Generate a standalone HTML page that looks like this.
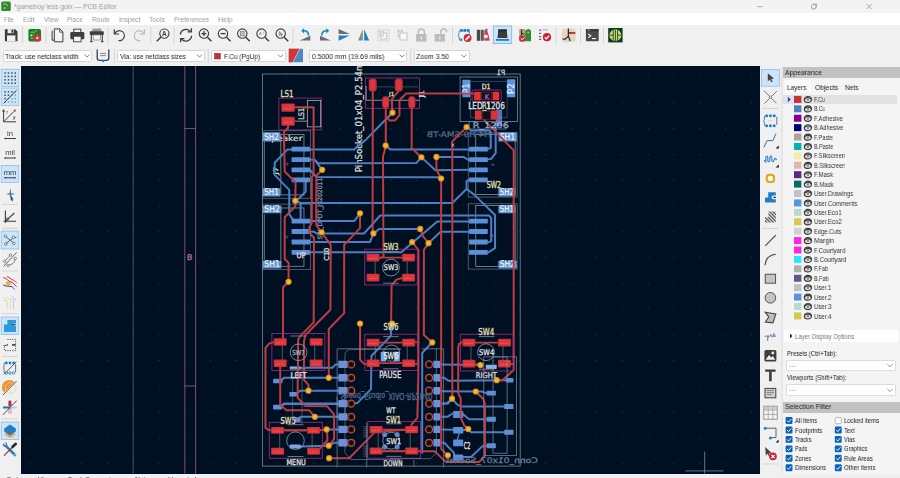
<!DOCTYPE html>
<html><head><meta charset="utf-8"><title>gameboy less goix — PCB Editor</title>
<style>
*{box-sizing:border-box}
html,body{margin:0;padding:0}
body{width:900px;height:478px;overflow:hidden;position:relative;background:#f0f0f0;font-family:"Liberation Sans", sans-serif;font-size:8px;color:#1a1a1a}
.abs{position:absolute}
.t{position:absolute;white-space:nowrap;transform-origin:0 0;line-height:1;will-change:transform}
#title{position:absolute;left:0;top:0;width:900px;height:13.4px;background:#f3f3f3}
#menu{position:absolute;left:0;top:13.4px;width:900px;height:11.6px;background:#fff}
#tb{position:absolute;left:0;top:25px;width:900px;height:41.8px;background:#f0f0f0}
.dd{position:absolute;top:50.3px;height:11.6px;background:#fff;border:0.6px solid #d6d6d6;border-radius:1.5px}
#canvas{position:absolute;left:20.6px;top:66.4px;width:739.2px;height:407.4px;background:#001023;overflow:hidden}
#panel{position:absolute;left:783.2px;top:66.6px;width:116.8px;height:411.4px;background:#f4f4f4}
.hdr{position:absolute;left:783.2px;width:116.8px;height:11px;background:#c2c2c2}
.sel{position:absolute;left:786px;width:110px;height:11.4px;background:#fff;border:0.6px solid #dcdcdc;border-radius:1.5px}
svg{position:absolute;left:0;top:0;overflow:visible}
</style></head><body>
<div id="title"></div>
<div id="menu"></div>
<div id="tb"></div>
<div class="dd" style="left:2.6px;width:89.6px"></div><div class="dd" style="left:116.6px;width:88px"></div><div class="dd" style="left:210.8px;width:74.8px"></div><div class="dd" style="left:309px;width:98.4px"></div><div class="dd" style="left:413.6px;width:56px"></div>
<div id="canvas"><svg width="739.2" height="407.4" viewBox="20.6 66.4 739.2 407.4" font-family="DejaVu Sans, Liberation Sans, sans-serif"><path d="M29.2,77.5h1.4M29.2,103.3h1.4M29.2,129.0h1.4M29.2,154.8h1.4M29.2,180.6h1.4M29.2,206.3h1.4M29.2,232.1h1.4M29.2,257.9h1.4M29.2,283.7h1.4M29.2,309.4h1.4M29.2,335.2h1.4M29.2,361.0h1.4M29.2,386.7h1.4M29.2,412.5h1.4M29.2,438.3h1.4M29.2,464.1h1.4M54.9,77.5h1.4M54.9,103.3h1.4M54.9,129.0h1.4M54.9,154.8h1.4M54.9,180.6h1.4M54.9,206.3h1.4M54.9,232.1h1.4M54.9,257.9h1.4M54.9,283.7h1.4M54.9,309.4h1.4M54.9,335.2h1.4M54.9,361.0h1.4M54.9,386.7h1.4M54.9,412.5h1.4M54.9,438.3h1.4M54.9,464.1h1.4M80.7,77.5h1.4M80.7,103.3h1.4M80.7,129.0h1.4M80.7,154.8h1.4M80.7,180.6h1.4M80.7,206.3h1.4M80.7,232.1h1.4M80.7,257.9h1.4M80.7,283.7h1.4M80.7,309.4h1.4M80.7,335.2h1.4M80.7,361.0h1.4M80.7,386.7h1.4M80.7,412.5h1.4M80.7,438.3h1.4M80.7,464.1h1.4M106.4,77.5h1.4M106.4,103.3h1.4M106.4,129.0h1.4M106.4,154.8h1.4M106.4,180.6h1.4M106.4,206.3h1.4M106.4,232.1h1.4M106.4,257.9h1.4M106.4,283.7h1.4M106.4,309.4h1.4M106.4,335.2h1.4M106.4,361.0h1.4M106.4,386.7h1.4M106.4,412.5h1.4M106.4,438.3h1.4M106.4,464.1h1.4M132.2,77.5h1.4M132.2,103.3h1.4M132.2,129.0h1.4M132.2,154.8h1.4M132.2,180.6h1.4M132.2,206.3h1.4M132.2,232.1h1.4M132.2,257.9h1.4M132.2,283.7h1.4M132.2,309.4h1.4M132.2,335.2h1.4M132.2,361.0h1.4M132.2,386.7h1.4M132.2,412.5h1.4M132.2,438.3h1.4M132.2,464.1h1.4M157.9,77.5h1.4M157.9,103.3h1.4M157.9,129.0h1.4M157.9,154.8h1.4M157.9,180.6h1.4M157.9,206.3h1.4M157.9,232.1h1.4M157.9,257.9h1.4M157.9,283.7h1.4M157.9,309.4h1.4M157.9,335.2h1.4M157.9,361.0h1.4M157.9,386.7h1.4M157.9,412.5h1.4M157.9,438.3h1.4M157.9,464.1h1.4M183.7,77.5h1.4M183.7,103.3h1.4M183.7,129.0h1.4M183.7,154.8h1.4M183.7,180.6h1.4M183.7,206.3h1.4M183.7,232.1h1.4M183.7,257.9h1.4M183.7,283.7h1.4M183.7,309.4h1.4M183.7,335.2h1.4M183.7,361.0h1.4M183.7,386.7h1.4M183.7,412.5h1.4M183.7,438.3h1.4M183.7,464.1h1.4M209.4,77.5h1.4M209.4,103.3h1.4M209.4,129.0h1.4M209.4,154.8h1.4M209.4,180.6h1.4M209.4,206.3h1.4M209.4,232.1h1.4M209.4,257.9h1.4M209.4,283.7h1.4M209.4,309.4h1.4M209.4,335.2h1.4M209.4,361.0h1.4M209.4,386.7h1.4M209.4,412.5h1.4M209.4,438.3h1.4M209.4,464.1h1.4M235.2,77.5h1.4M235.2,103.3h1.4M235.2,129.0h1.4M235.2,154.8h1.4M235.2,180.6h1.4M235.2,206.3h1.4M235.2,232.1h1.4M235.2,257.9h1.4M235.2,283.7h1.4M235.2,309.4h1.4M235.2,335.2h1.4M235.2,361.0h1.4M235.2,386.7h1.4M235.2,412.5h1.4M235.2,438.3h1.4M235.2,464.1h1.4M260.9,77.5h1.4M260.9,103.3h1.4M260.9,129.0h1.4M260.9,154.8h1.4M260.9,180.6h1.4M260.9,206.3h1.4M260.9,232.1h1.4M260.9,257.9h1.4M260.9,283.7h1.4M260.9,309.4h1.4M260.9,335.2h1.4M260.9,361.0h1.4M260.9,386.7h1.4M260.9,412.5h1.4M260.9,438.3h1.4M260.9,464.1h1.4M286.7,77.5h1.4M286.7,103.3h1.4M286.7,129.0h1.4M286.7,154.8h1.4M286.7,180.6h1.4M286.7,206.3h1.4M286.7,232.1h1.4M286.7,257.9h1.4M286.7,283.7h1.4M286.7,309.4h1.4M286.7,335.2h1.4M286.7,361.0h1.4M286.7,386.7h1.4M286.7,412.5h1.4M286.7,438.3h1.4M286.7,464.1h1.4M312.4,77.5h1.4M312.4,103.3h1.4M312.4,129.0h1.4M312.4,154.8h1.4M312.4,180.6h1.4M312.4,206.3h1.4M312.4,232.1h1.4M312.4,257.9h1.4M312.4,283.7h1.4M312.4,309.4h1.4M312.4,335.2h1.4M312.4,361.0h1.4M312.4,386.7h1.4M312.4,412.5h1.4M312.4,438.3h1.4M312.4,464.1h1.4M338.2,77.5h1.4M338.2,103.3h1.4M338.2,129.0h1.4M338.2,154.8h1.4M338.2,180.6h1.4M338.2,206.3h1.4M338.2,232.1h1.4M338.2,257.9h1.4M338.2,283.7h1.4M338.2,309.4h1.4M338.2,335.2h1.4M338.2,361.0h1.4M338.2,386.7h1.4M338.2,412.5h1.4M338.2,438.3h1.4M338.2,464.1h1.4M363.9,77.5h1.4M363.9,103.3h1.4M363.9,129.0h1.4M363.9,154.8h1.4M363.9,180.6h1.4M363.9,206.3h1.4M363.9,232.1h1.4M363.9,257.9h1.4M363.9,283.7h1.4M363.9,309.4h1.4M363.9,335.2h1.4M363.9,361.0h1.4M363.9,386.7h1.4M363.9,412.5h1.4M363.9,438.3h1.4M363.9,464.1h1.4M389.7,77.5h1.4M389.7,103.3h1.4M389.7,129.0h1.4M389.7,154.8h1.4M389.7,180.6h1.4M389.7,206.3h1.4M389.7,232.1h1.4M389.7,257.9h1.4M389.7,283.7h1.4M389.7,309.4h1.4M389.7,335.2h1.4M389.7,361.0h1.4M389.7,386.7h1.4M389.7,412.5h1.4M389.7,438.3h1.4M389.7,464.1h1.4M415.4,77.5h1.4M415.4,103.3h1.4M415.4,129.0h1.4M415.4,154.8h1.4M415.4,180.6h1.4M415.4,206.3h1.4M415.4,232.1h1.4M415.4,257.9h1.4M415.4,283.7h1.4M415.4,309.4h1.4M415.4,335.2h1.4M415.4,361.0h1.4M415.4,386.7h1.4M415.4,412.5h1.4M415.4,438.3h1.4M415.4,464.1h1.4M441.2,77.5h1.4M441.2,103.3h1.4M441.2,129.0h1.4M441.2,154.8h1.4M441.2,180.6h1.4M441.2,206.3h1.4M441.2,232.1h1.4M441.2,257.9h1.4M441.2,283.7h1.4M441.2,309.4h1.4M441.2,335.2h1.4M441.2,361.0h1.4M441.2,386.7h1.4M441.2,412.5h1.4M441.2,438.3h1.4M441.2,464.1h1.4M466.9,77.5h1.4M466.9,103.3h1.4M466.9,129.0h1.4M466.9,154.8h1.4M466.9,180.6h1.4M466.9,206.3h1.4M466.9,232.1h1.4M466.9,257.9h1.4M466.9,283.7h1.4M466.9,309.4h1.4M466.9,335.2h1.4M466.9,361.0h1.4M466.9,386.7h1.4M466.9,412.5h1.4M466.9,438.3h1.4M466.9,464.1h1.4M492.7,77.5h1.4M492.7,103.3h1.4M492.7,129.0h1.4M492.7,154.8h1.4M492.7,180.6h1.4M492.7,206.3h1.4M492.7,232.1h1.4M492.7,257.9h1.4M492.7,283.7h1.4M492.7,309.4h1.4M492.7,335.2h1.4M492.7,361.0h1.4M492.7,386.7h1.4M492.7,412.5h1.4M492.7,438.3h1.4M492.7,464.1h1.4M518.4,77.5h1.4M518.4,103.3h1.4M518.4,129.0h1.4M518.4,154.8h1.4M518.4,180.6h1.4M518.4,206.3h1.4M518.4,232.1h1.4M518.4,257.9h1.4M518.4,283.7h1.4M518.4,309.4h1.4M518.4,335.2h1.4M518.4,361.0h1.4M518.4,386.7h1.4M518.4,412.5h1.4M518.4,438.3h1.4M518.4,464.1h1.4M544.2,77.5h1.4M544.2,103.3h1.4M544.2,129.0h1.4M544.2,154.8h1.4M544.2,180.6h1.4M544.2,206.3h1.4M544.2,232.1h1.4M544.2,257.9h1.4M544.2,283.7h1.4M544.2,309.4h1.4M544.2,335.2h1.4M544.2,361.0h1.4M544.2,386.7h1.4M544.2,412.5h1.4M544.2,438.3h1.4M544.2,464.1h1.4M569.9,77.5h1.4M569.9,103.3h1.4M569.9,129.0h1.4M569.9,154.8h1.4M569.9,180.6h1.4M569.9,206.3h1.4M569.9,232.1h1.4M569.9,257.9h1.4M569.9,283.7h1.4M569.9,309.4h1.4M569.9,335.2h1.4M569.9,361.0h1.4M569.9,386.7h1.4M569.9,412.5h1.4M569.9,438.3h1.4M569.9,464.1h1.4M595.7,77.5h1.4M595.7,103.3h1.4M595.7,129.0h1.4M595.7,154.8h1.4M595.7,180.6h1.4M595.7,206.3h1.4M595.7,232.1h1.4M595.7,257.9h1.4M595.7,283.7h1.4M595.7,309.4h1.4M595.7,335.2h1.4M595.7,361.0h1.4M595.7,386.7h1.4M595.7,412.5h1.4M595.7,438.3h1.4M595.7,464.1h1.4M621.4,77.5h1.4M621.4,103.3h1.4M621.4,129.0h1.4M621.4,154.8h1.4M621.4,180.6h1.4M621.4,206.3h1.4M621.4,232.1h1.4M621.4,257.9h1.4M621.4,283.7h1.4M621.4,309.4h1.4M621.4,335.2h1.4M621.4,361.0h1.4M621.4,386.7h1.4M621.4,412.5h1.4M621.4,438.3h1.4M621.4,464.1h1.4M647.2,77.5h1.4M647.2,103.3h1.4M647.2,129.0h1.4M647.2,154.8h1.4M647.2,180.6h1.4M647.2,206.3h1.4M647.2,232.1h1.4M647.2,257.9h1.4M647.2,283.7h1.4M647.2,309.4h1.4M647.2,335.2h1.4M647.2,361.0h1.4M647.2,386.7h1.4M647.2,412.5h1.4M647.2,438.3h1.4M647.2,464.1h1.4M672.9,77.5h1.4M672.9,103.3h1.4M672.9,129.0h1.4M672.9,154.8h1.4M672.9,180.6h1.4M672.9,206.3h1.4M672.9,232.1h1.4M672.9,257.9h1.4M672.9,283.7h1.4M672.9,309.4h1.4M672.9,335.2h1.4M672.9,361.0h1.4M672.9,386.7h1.4M672.9,412.5h1.4M672.9,438.3h1.4M672.9,464.1h1.4M698.7,77.5h1.4M698.7,103.3h1.4M698.7,129.0h1.4M698.7,154.8h1.4M698.7,180.6h1.4M698.7,206.3h1.4M698.7,232.1h1.4M698.7,257.9h1.4M698.7,283.7h1.4M698.7,309.4h1.4M698.7,335.2h1.4M698.7,361.0h1.4M698.7,386.7h1.4M698.7,412.5h1.4M698.7,438.3h1.4M698.7,464.1h1.4M724.4,77.5h1.4M724.4,103.3h1.4M724.4,129.0h1.4M724.4,154.8h1.4M724.4,180.6h1.4M724.4,206.3h1.4M724.4,232.1h1.4M724.4,257.9h1.4M724.4,283.7h1.4M724.4,309.4h1.4M724.4,335.2h1.4M724.4,361.0h1.4M724.4,386.7h1.4M724.4,412.5h1.4M724.4,438.3h1.4M724.4,464.1h1.4M750.2,77.5h1.4M750.2,103.3h1.4M750.2,129.0h1.4M750.2,154.8h1.4M750.2,180.6h1.4M750.2,206.3h1.4M750.2,232.1h1.4M750.2,257.9h1.4M750.2,283.7h1.4M750.2,309.4h1.4M750.2,335.2h1.4M750.2,361.0h1.4M750.2,386.7h1.4M750.2,412.5h1.4M750.2,438.3h1.4M750.2,464.1h1.4" stroke="#2c3c54" stroke-width="1" opacity="0.75"/>
<path d="M132.8,66 V474" stroke="#5f7388" stroke-width="0.7"/>
<path d="M184.4,66 V474 M195.2,66 V474 M184.4,129 H195.2 M184.4,386.4 H195.2" stroke="#a45a8a" stroke-width="0.8" fill="none"/>
<text transform="translate(186.6,260.6)" font-size="7.81" fill="#b878a0" stroke="#b878a0" stroke-width="0.28" text-anchor="start" font-weight="normal">B</text>
<path d="M685,471.3 H723 M704.3,452 V474" stroke="#aab4c0" stroke-width="0.6"/>
<rect x="262.00" y="74.40" width="257.80" height="392.10" fill="none" stroke="#7f8990" stroke-width="0.8" rx="0"/>
<rect x="278.46" y="98.48" width="42.69" height="31.81" fill="none" stroke="#9a2f86" stroke-width="0.8" rx="0"/>
<rect x="306.92" y="101.00" width="13.40" height="26.28" fill="none" stroke="#bfc3c8" stroke-width="0.7" rx="0"/>
<polyline points="294.37,108.03 306.92,108.03" fill="none" stroke="#bfc3c8" stroke-width="0.7" stroke-linejoin="round" stroke-linecap="round"/>
<polyline points="294.37,121.59 306.92,121.59" fill="none" stroke="#bfc3c8" stroke-width="0.7" stroke-linejoin="round" stroke-linecap="round"/>
<text transform="translate(280.14,97.81)" font-size="8.78" fill="#e4e2b8" stroke="#e4e2b8" stroke-width="0.28" text-anchor="start" font-weight="normal" textLength="13.0" lengthAdjust="spacingAndGlyphs">LS1</text>
<text transform="translate(303.91,120.25) rotate(-90)" font-size="7.81" fill="#d8d8d8" stroke="#d8d8d8" stroke-width="0.28" text-anchor="start" font-weight="normal" textLength="12.0" lengthAdjust="spacingAndGlyphs">LS1</text>
<text transform="translate(362,172.6) rotate(-90)" font-size="9.27" fill="#dcdcdc" stroke="#dcdcdc" stroke-width="0.28" text-anchor="start" font-weight="normal" textLength="118.0" lengthAdjust="spacingAndGlyphs">PinSocket_01x04_P2.54mm</text>
<rect x="365.20" y="78.40" width="53.80" height="30.30" fill="none" stroke="#9a2f86" stroke-width="0.8" rx="0"/>
<polyline points="365.8,86.9 365.8,100.7 418.6,100.7" fill="none" stroke="#bfc3c8" stroke-width="0.7" stroke-linejoin="round" stroke-linecap="round"/>
<polyline points="376.4,87.3 417.2,87.3" fill="none" stroke="#bfc3c8" stroke-width="0.6" stroke-linejoin="round" stroke-linecap="round" opacity="0.5"/>
<text transform="translate(388.62,96.14)" font-size="5.61" fill="#e4e2b8" stroke="#e4e2b8" stroke-width="0.28" text-anchor="start" font-weight="normal">J1</text>
<text transform="translate(423.6,97.6) rotate(-90)" font-size="6.83" fill="#e8e8e8" stroke="#e8e8e8" stroke-width="0.28" text-anchor="start" font-weight="normal" textLength="7.0" lengthAdjust="spacingAndGlyphs">J1</text>
<rect x="262.05" y="131.19" width="48.22" height="67.47" fill="none" stroke="#7f8f9f" stroke-width="0.7" rx="0" opacity="0.8"/>
<rect x="280.47" y="135.05" width="23.10" height="60.27" fill="none" stroke="#9aa4ae" stroke-width="0.7" rx="0"/>
<polyline points="263.9,141.74 263.9,188.95" fill="none" stroke="#9aa4ae" stroke-width="0.7" stroke-linejoin="round" stroke-linecap="round"/>
<rect x="262.05" y="204.54" width="48.22" height="65.46" fill="none" stroke="#7f8f9f" stroke-width="0.7" rx="0" opacity="0.8"/>
<rect x="280.47" y="208.39" width="23.10" height="58.27" fill="none" stroke="#9aa4ae" stroke-width="0.7" rx="0"/>
<polyline points="263.9,215.09 263.9,260.29" fill="none" stroke="#9aa4ae" stroke-width="0.7" stroke-linejoin="round" stroke-linecap="round"/>
<text transform="translate(265,141.7)" font-size="7.81" fill="#e0e0e0" stroke="#e0e0e0" stroke-width="0.15" text-anchor="start" font-weight="normal" textLength="37.0" lengthAdjust="spacingAndGlyphs">Speaker</text>
<text transform="translate(277.79,175.23) rotate(-90)" font-size="6.1" fill="#e4e2b8" stroke="#e4e2b8" stroke-width="0.28" text-anchor="start" font-weight="normal" textLength="8.0" lengthAdjust="spacingAndGlyphs">J7</text>
<text transform="translate(321.6,240) rotate(-90)" font-size="6.1" fill="#8493ad" stroke="#8493ad" stroke-width="0.28" text-anchor="start" font-weight="normal" textLength="62.0" lengthAdjust="spacingAndGlyphs">SW_DPDT_JS202011</text>
<rect x="467.85" y="133.37" width="48.89" height="64.12" fill="none" stroke="#7f8f9f" stroke-width="0.7" rx="0" opacity="0.8"/>
<rect x="475.38" y="135.05" width="39.35" height="59.76" fill="none" stroke="#9aa4ae" stroke-width="0.7" rx="0"/>
<rect x="467.85" y="204.21" width="48.89" height="65.29" fill="none" stroke="#7f8f9f" stroke-width="0.7" rx="0" opacity="0.8"/>
<rect x="475.38" y="205.88" width="39.35" height="60.94" fill="none" stroke="#9aa4ae" stroke-width="0.7" rx="0"/>
<rect x="459.70" y="77.40" width="57.50" height="44.60" fill="none" stroke="#6f8f9f" stroke-width="0.8" rx="0"/>
<rect x="476" y="118" width="30" height="8" fill="#001023"/>
<rect x="470.20" y="81.70" width="36.50" height="36.30" fill="none" stroke="#3e5a70" stroke-width="0.7" rx="0"/>
<rect x="468.69" y="121.92" width="36.83" height="7.54" fill="none" stroke="#6f8f9f" stroke-width="0.7" rx="0"/>
<text transform="translate(504.8,75.2) scale(-1,1)" font-size="7.32" fill="#d0d0d0" stroke="#d0d0d0" stroke-width="0.28" text-anchor="start" font-weight="normal" textLength="8.6" lengthAdjust="spacingAndGlyphs">P1</text>
<text transform="translate(490.6,137.4) scale(-1,1)" font-size="7.56" fill="#56688a" stroke="#56688a" stroke-width="0.28" text-anchor="start" font-weight="normal" textLength="64.0" lengthAdjust="spacingAndGlyphs">H4 H9-SMA-TB</text>
<polyline points="392.1,113.1 365.52,140.07 353.8,149.78 309.43,149.78" fill="none" stroke="#4d7fc4" stroke-width="2.0" stroke-linejoin="round" stroke-linecap="round"/>
<polyline points="291.02,149.78 287.17,149.78 274.28,163.17 274.28,175.23 288.84,190.29 288.84,214.76 292.69,220.11" fill="none" stroke="#4d7fc4" stroke-width="2.0" stroke-linejoin="round" stroke-linecap="round"/>
<polyline points="309.6,160.1 314.1,160.1 317.7,163.6 415.95,163.51 420.97,157.65" fill="none" stroke="#4d7fc4" stroke-width="2.0" stroke-linejoin="round" stroke-linecap="round"/>
<polyline points="314.6,160.6 321.8,170.2" fill="none" stroke="#4d7fc4" stroke-width="2.0" stroke-linejoin="round" stroke-linecap="round"/>
<polyline points="309.6,170.3 311.4,172.4 316,177.4 438.55,177.74 440.73,178.91" fill="none" stroke="#4d7fc4" stroke-width="2.0" stroke-linejoin="round" stroke-linecap="round"/>
<polyline points="305.25,181.92 305.25,191.97 298.89,198.66 294.87,201.18" fill="none" stroke="#4d7fc4" stroke-width="2.0" stroke-linejoin="round" stroke-linecap="round"/>
<polyline points="294.87,201.18 300.23,203.37 451.95,203.35 466.18,189.46 466.18,181.59 468.69,180.25" fill="none" stroke="#4d7fc4" stroke-width="2.0" stroke-linejoin="round" stroke-linecap="round"/>
<polyline points="300.23,203.37 300.23,220.11" fill="none" stroke="#4d7fc4" stroke-width="2.0" stroke-linejoin="round" stroke-linecap="round"/>
<polyline points="466.18,189.46 473.71,195.0 494.64,215.43 494.64,248.57 487.94,252.76" fill="none" stroke="#4d7fc4" stroke-width="2.0" stroke-linejoin="round" stroke-linecap="round"/>
<polyline points="385.28,145.93 389.8,149.78 468.69,149.78" fill="none" stroke="#4d7fc4" stroke-width="2.0" stroke-linejoin="round" stroke-linecap="round"/>
<polyline points="420.97,157.65 434.87,170.54 468.69,170.2" fill="none" stroke="#4d7fc4" stroke-width="2.0" stroke-linejoin="round" stroke-linecap="round"/>
<polyline points="436.04,157.31 462.83,157.31 468.69,160.49" fill="none" stroke="#4d7fc4" stroke-width="2.0" stroke-linejoin="round" stroke-linecap="round"/>
<polyline points="466.7,126.8 470.5,130.8 488.8,130.8 490.4,132.6 490.4,148.3 486.9,149.7" fill="none" stroke="#4d7fc4" stroke-width="2.0" stroke-linejoin="round" stroke-linecap="round"/>
<polyline points="486.9,159.7 490.6,159.5 495.3,153.6 495.3,124" fill="none" stroke="#4d7fc4" stroke-width="2.0" stroke-linejoin="round" stroke-linecap="round"/>
<polyline points="309.43,221.45 353.8,221.45 359.66,213.75" fill="none" stroke="#4d7fc4" stroke-width="2.0" stroke-linejoin="round" stroke-linecap="round"/>
<polyline points="309.43,231.83 313.62,232.17 316.13,233.84 363.85,233.84 379.75,215.93 488.78,215.93 490.79,218.44 490.79,241.54 487.94,242.71" fill="none" stroke="#4d7fc4" stroke-width="2.0" stroke-linejoin="round" stroke-linecap="round"/>
<polyline points="309.43,242.38 369.71,242.38 373.05,233.84 378.91,229.32 419.8,229.32" fill="none" stroke="#4d7fc4" stroke-width="2.0" stroke-linejoin="round" stroke-linecap="round"/>
<polyline points="309.43,252.76 400.88,252.76 436.88,221.79 468.69,221.79" fill="none" stroke="#4d7fc4" stroke-width="2.0" stroke-linejoin="round" stroke-linecap="round"/>
<polyline points="428.17,243.55 440.23,232.17 468.69,232.17" fill="none" stroke="#4d7fc4" stroke-width="2.0" stroke-linejoin="round" stroke-linecap="round"/>
<polyline points="280.97,381.04 283.48,378.19 337.9,378.19" fill="none" stroke="#4d7fc4" stroke-width="2.0" stroke-linejoin="round" stroke-linecap="round"/>
<polyline points="295.2,394.43 300.23,391.09 337.9,391.09" fill="none" stroke="#4d7fc4" stroke-width="2.0" stroke-linejoin="round" stroke-linecap="round"/>
<polyline points="280.97,407.33 283.48,404.48 337.9,404.48" fill="none" stroke="#4d7fc4" stroke-width="2.0" stroke-linejoin="round" stroke-linecap="round"/>
<polyline points="300.23,368.15 332.04,368.15 335.38,364.8 337.9,364.8" fill="none" stroke="#4d7fc4" stroke-width="2.0" stroke-linejoin="round" stroke-linecap="round"/>
<polyline points="390.6,323.8 390.6,336 371,356.4 370.6,389.5 357.2,403.3 351,404" fill="none" stroke="#4d7fc4" stroke-width="2.0" stroke-linejoin="round" stroke-linecap="round"/>
<polyline points="280.97,406.37 283.48,403.86 337.9,403.86" fill="none" stroke="#4d7fc4" stroke-width="2.0" stroke-linejoin="round" stroke-linecap="round"/>
<polyline points="296.88,420.1 300.23,417.25 337.9,417.25" fill="none" stroke="#4d7fc4" stroke-width="2.0" stroke-linejoin="round" stroke-linecap="round"/>
<polyline points="326.18,429.81 337.9,429.81" fill="none" stroke="#4d7fc4" stroke-width="2.0" stroke-linejoin="round" stroke-linecap="round"/>
<polyline points="300.23,446.89 328.35,446.05 333.71,443.2 337.9,443.2" fill="none" stroke="#4d7fc4" stroke-width="2.0" stroke-linejoin="round" stroke-linecap="round"/>
<polyline points="431.86,342.53 421.81,353.42 421.81,453.25" fill="none" stroke="#4d7fc4" stroke-width="2.0" stroke-linejoin="round" stroke-linecap="round"/>
<polyline points="440.23,364.8 480.07,365.47" fill="none" stroke="#4d7fc4" stroke-width="2.0" stroke-linejoin="round" stroke-linecap="round"/>
<polyline points="440.23,378.19 443.91,378.19 447.76,381.04 505.52,380.54" fill="none" stroke="#4d7fc4" stroke-width="2.0" stroke-linejoin="round" stroke-linecap="round"/>
<polyline points="440.23,391.59 481.24,391.92 486.27,393.6" fill="none" stroke="#4d7fc4" stroke-width="2.0" stroke-linejoin="round" stroke-linecap="round"/>
<polyline points="440.23,403.98 446.09,403.98 451.61,399.12 456.97,404.98 461.15,406.99 505.52,406.99" fill="none" stroke="#4d7fc4" stroke-width="2.0" stroke-linejoin="round" stroke-linecap="round"/>
<polyline points="440.23,403.86 447.76,403.86 451.61,399.34" fill="none" stroke="#4d7fc4" stroke-width="2.0" stroke-linejoin="round" stroke-linecap="round"/>
<polyline points="440.23,417.25 446.92,417.25 452.28,413.9" fill="none" stroke="#4d7fc4" stroke-width="2.0" stroke-linejoin="round" stroke-linecap="round"/>
<polyline points="462.83,414.74 468.69,419.76 486.27,419.76" fill="none" stroke="#4d7fc4" stroke-width="2.0" stroke-linejoin="round" stroke-linecap="round"/>
<polyline points="440.23,429.81 452.78,430.14" fill="none" stroke="#4d7fc4" stroke-width="2.0" stroke-linejoin="round" stroke-linecap="round"/>
<polyline points="462.83,430.65 467.85,429.47 470.7,432.66 505.52,432.66" fill="none" stroke="#4d7fc4" stroke-width="2.0" stroke-linejoin="round" stroke-linecap="round"/>
<polyline points="440.23,443.2 443.91,443.2 453.62,453.25 453.62,455.76" fill="none" stroke="#4d7fc4" stroke-width="2.0" stroke-linejoin="round" stroke-linecap="round"/>
<polyline points="462.83,457.43 470.7,457.43 482.08,446.55 486.27,446.05" fill="none" stroke="#4d7fc4" stroke-width="2.0" stroke-linejoin="round" stroke-linecap="round"/>
<polyline points="458.64,434.0 456.97,439.86" fill="none" stroke="#4d7fc4" stroke-width="1.4" stroke-linejoin="round" stroke-linecap="round"/>
<rect x="291.20" y="147.20" width="18.40" height="4.80" fill="#5b8fd8"  rx="0.6"/>
<rect x="468.70" y="147.20" width="18.70" height="4.80" fill="#5b8fd8"  rx="0.6"/>
<rect x="291.20" y="157.70" width="18.40" height="4.80" fill="#5b8fd8"  rx="0.6"/>
<rect x="468.70" y="157.70" width="18.70" height="4.80" fill="#5b8fd8"  rx="0.6"/>
<rect x="291.20" y="167.90" width="18.40" height="4.80" fill="#5b8fd8"  rx="0.6"/>
<rect x="468.70" y="167.90" width="18.70" height="4.80" fill="#5b8fd8"  rx="0.6"/>
<rect x="291.20" y="177.80" width="18.40" height="4.80" fill="#5b8fd8"  rx="0.6"/>
<rect x="468.70" y="177.80" width="18.70" height="4.80" fill="#5b8fd8"  rx="0.6"/>
<rect x="291.20" y="219.20" width="18.40" height="4.80" fill="#5b8fd8"  rx="0.6"/>
<rect x="468.70" y="219.20" width="18.70" height="4.80" fill="#5b8fd8"  rx="0.6"/>
<rect x="291.20" y="229.50" width="18.40" height="4.80" fill="#5b8fd8"  rx="0.6"/>
<rect x="468.70" y="229.50" width="18.70" height="4.80" fill="#5b8fd8"  rx="0.6"/>
<rect x="291.20" y="240.00" width="18.40" height="4.80" fill="#5b8fd8"  rx="0.6"/>
<rect x="468.70" y="240.00" width="18.70" height="4.80" fill="#5b8fd8"  rx="0.6"/>
<rect x="291.20" y="250.40" width="18.40" height="4.80" fill="#5b8fd8"  rx="0.6"/>
<rect x="468.70" y="250.40" width="18.70" height="4.80" fill="#5b8fd8"  rx="0.6"/>
<rect x="262.50" y="132.60" width="17.50" height="9.20" fill="#6ea3dc"  rx="0.6" opacity="0.92"/>
<text transform="translate(263.9,140.3)" font-size="9.03" fill="#f4f8ff" stroke="#f4f8ff" stroke-width="0.1" text-anchor="start" font-weight="normal" textLength="14.5" lengthAdjust="spacingAndGlyphs">SH2</text>
<rect x="262.50" y="188.60" width="17.50" height="8.40" fill="#6ea3dc"  rx="0.6" opacity="0.92"/>
<text transform="translate(263.9,195.5)" font-size="9.03" fill="#f4f8ff" stroke="#f4f8ff" stroke-width="0.1" text-anchor="start" font-weight="normal" textLength="14.5" lengthAdjust="spacingAndGlyphs">SH1</text>
<rect x="262.50" y="205.90" width="18.50" height="7.70" fill="#6ea3dc"  rx="0.6" opacity="0.92"/>
<text transform="translate(263.9,212.1)" font-size="9.03" fill="#f4f8ff" stroke="#f4f8ff" stroke-width="0.1" text-anchor="start" font-weight="normal" textLength="15.5" lengthAdjust="spacingAndGlyphs">SH2</text>
<rect x="262.50" y="261.10" width="18.50" height="7.70" fill="#6ea3dc"  rx="0.6" opacity="0.92"/>
<text transform="translate(263.9,267.3)" font-size="9.03" fill="#f4f8ff" stroke="#f4f8ff" stroke-width="0.1" text-anchor="start" font-weight="normal" textLength="15.5" lengthAdjust="spacingAndGlyphs">SH1</text>
<rect x="498.00" y="132.60" width="18.40" height="9.20" fill="#6ea3dc"  rx="0.6" opacity="0.92"/>
<text transform="translate(499.4,140.3)" font-size="9.03" fill="#f4f8ff" stroke="#f4f8ff" stroke-width="0.1" text-anchor="start" font-weight="normal" textLength="15.4" lengthAdjust="spacingAndGlyphs">SH1</text>
<rect x="498.00" y="188.60" width="17.00" height="8.40" fill="#6ea3dc"  rx="0.6" opacity="0.92"/>
<text transform="translate(499.4,195.5)" font-size="9.03" fill="#f4f8ff" stroke="#f4f8ff" stroke-width="0.1" text-anchor="start" font-weight="normal" textLength="14.0" lengthAdjust="spacingAndGlyphs">SH2</text>
<rect x="498.00" y="205.90" width="17.00" height="7.70" fill="#6ea3dc"  rx="0.6" opacity="0.92"/>
<text transform="translate(499.4,212.1)" font-size="9.03" fill="#f4f8ff" stroke="#f4f8ff" stroke-width="0.1" text-anchor="start" font-weight="normal" textLength="14.0" lengthAdjust="spacingAndGlyphs">SH1</text>
<rect x="498.00" y="261.10" width="18.40" height="7.70" fill="#6ea3dc"  rx="0.6" opacity="0.92"/>
<text transform="translate(499.4,267.3)" font-size="9.03" fill="#f4f8ff" stroke="#f4f8ff" stroke-width="0.1" text-anchor="start" font-weight="normal" textLength="15.4" lengthAdjust="spacingAndGlyphs">SH2</text>
<rect x="462.00" y="80.10" width="7.80" height="17.50" fill="#5f93dc"  rx="0.6"/>
<rect x="506.70" y="79.70" width="8.20" height="17.90" fill="#5f93dc"  rx="0.6"/>
<text transform="translate(468.6,94.3) rotate(-90)" font-size="8.54" fill="#eef4ff" stroke="#eef4ff" stroke-width="0.1" text-anchor="start" font-weight="normal" textLength="10.6" lengthAdjust="spacingAndGlyphs">P1</text>
<text transform="translate(513.6,94.3) rotate(-90)" font-size="8.54" fill="#eef4ff" stroke="#eef4ff" stroke-width="0.1" text-anchor="start" font-weight="normal" textLength="10.6" lengthAdjust="spacingAndGlyphs">P2</text>
<rect x="272.70" y="379.10" width="9.30" height="4.60" fill="#5b8fd8"  rx="0.6"/>
<rect x="289.10" y="392.40" width="8.50" height="4.50" fill="#5b8fd8"  rx="0.6"/>
<rect x="272.70" y="405.20" width="8.90" height="4.60" fill="#5b8fd8"  rx="0.6"/>
<rect x="289.34" y="366.81" width="10.89" height="3.01" fill="#8ab4e8"  rx="0.6"/>
<rect x="289.34" y="444.88" width="10.89" height="4.02" fill="#7aa8e0"  rx="0.6"/>
<rect x="293.86" y="417.76" width="6.37" height="5.02" fill="#5b8fd8"  rx="0.6"/>
<rect x="380.30" y="352.20" width="5.40" height="9.80" fill="#7aa6e0"  rx="0.6"/>
<rect x="393.60" y="352.20" width="5.80" height="9.80" fill="#7aa6e0"  rx="0.6"/>
<rect x="505.52" y="378.53" width="7.53" height="4.35" fill="#5b8fd8"  rx="0.6"/>
<rect x="486.27" y="391.25" width="9.20" height="4.69" fill="#5b8fd8"  rx="0.6"/>
<rect x="503.85" y="404.48" width="9.20" height="5.02" fill="#5b8fd8"  rx="0.6"/>
<rect x="486.27" y="417.25" width="9.20" height="5.03" fill="#5b8fd8"  rx="0.6"/>
<rect x="503.85" y="430.14" width="9.20" height="5.03" fill="#5b8fd8"  rx="0.6"/>
<rect x="486.27" y="443.54" width="9.20" height="5.02" fill="#5b8fd8"  rx="0.6"/>
<rect x="485.43" y="365.14" width="10.88" height="4.18" fill="#8ab4e8"  rx="0.6"/>
<rect x="452.78" y="411.39" width="10.05" height="7.04" fill="#5b8fd8"  rx="0.6"/>
<rect x="452.78" y="427.30" width="10.05" height="6.70" fill="#5b8fd8"  rx="0.6"/>
<rect x="452.78" y="439.86" width="10.05" height="6.69" fill="#5b8fd8"  rx="0.6"/>
<rect x="452.78" y="454.92" width="10.05" height="6.36" fill="#5b8fd8"  rx="0.6"/>
<rect x="495.40" y="110.00" width="6.30" height="16.40" fill="#7a86d8"  rx="0.6" opacity="0.8"/>
<polyline points="294.37,107.69 313.2,107.7 313.2,174 311.4,178 311.4,223.4 308.93,227.65 308.93,233.17 313.62,238.19 313.28,322.76 299.39,336.99 297.71,340.34 297.2,398.2 304.8,406.3 326.9,406.7 333.7,415 333.71,439.52 328.35,446.05" fill="none" stroke="#be3d43" stroke-width="2.0" stroke-linejoin="round" stroke-linecap="round"/>
<polyline points="287.67,126.11 287.67,128.28 283.48,132.47 284.32,171.88 295.2,182.76 294.87,201.18" fill="none" stroke="#be3d43" stroke-width="2.0" stroke-linejoin="round" stroke-linecap="round"/>
<polyline points="321.8,170.2 316,176.2 315.8,225.4 321.1,232.8 330.36,245.23 330.03,310.2 306.09,334.48 305.25,335.0 303.57,341.7 303.57,380.2 308.09,385.23 308.09,391.09" fill="none" stroke="#be3d43" stroke-width="2.0" stroke-linejoin="round" stroke-linecap="round"/>
<polyline points="294.87,201.36 294.87,206.72 284.32,217.6 284.32,259.46 288.17,263.31 288.17,282.24 282.65,287.6 282.65,339.5" fill="none" stroke="#be3d43" stroke-width="2.0" stroke-linejoin="round" stroke-linecap="round"/>
<polyline points="372.4,86 372.22,233.84" fill="none" stroke="#be3d43" stroke-width="2.0" stroke-linejoin="round" stroke-linecap="round"/>
<polyline points="385.4,102 385.4,146 384,152 382.6,157 383.1,257.28 379.75,258.28" fill="none" stroke="#be3d43" stroke-width="2.0" stroke-linejoin="round" stroke-linecap="round"/>
<polyline points="391.8,113.1 391.6,99.3 398.1,91.6" fill="none" stroke="#be3d43" stroke-width="2.0" stroke-linejoin="round" stroke-linecap="round"/>
<polyline points="473,94 405.7,94 399.1,100.7 399.1,115.4 394.8,120.8 389.4,120.8 385.7,117.4" fill="none" stroke="#be3d43" stroke-width="2.0" stroke-linejoin="round" stroke-linecap="round"/>
<polyline points="411.3,102 411.26,148.44 420.97,157.65" fill="none" stroke="#be3d43" stroke-width="2.0" stroke-linejoin="round" stroke-linecap="round"/>
<polyline points="466.18,127.51 451.95,141.74 451.95,399.12" fill="none" stroke="#be3d43" stroke-width="2.0" stroke-linejoin="round" stroke-linecap="round"/>
<polyline points="436.04,157.31 436.04,170.2 440.73,178.91 440.8,449.5 447.4,455.8" fill="none" stroke="#be3d43" stroke-width="2.0" stroke-linejoin="round" stroke-linecap="round"/>
<polyline points="483.76,120.25 513.3,150.8 513.3,370.4 502,380.6 496.31,380.54" fill="none" stroke="#be3d43" stroke-width="2.0" stroke-linejoin="round" stroke-linecap="round"/>
<polyline points="359.66,213.75 359.66,228.48 343.76,245.23 343.76,313.55 328.35,329.46 328.35,378.19" fill="none" stroke="#be3d43" stroke-width="2.0" stroke-linejoin="round" stroke-linecap="round"/>
<polyline points="419.8,229.32 422.65,236.86 428.17,243.55" fill="none" stroke="#be3d43" stroke-width="2.0" stroke-linejoin="round" stroke-linecap="round"/>
<polyline points="411.76,242.38 418.1,250.4 418,372 417,418.2 411.6,424.4 410,428" fill="none" stroke="#be3d43" stroke-width="2.0" stroke-linejoin="round" stroke-linecap="round"/>
<polyline points="428.17,243.55 423.48,250.25 423.48,335.32 431.86,342.85" fill="none" stroke="#be3d43" stroke-width="2.0" stroke-linejoin="round" stroke-linecap="round"/>
<polyline points="401.7,278.4 396,280 391.2,285.5 390.7,323.8" fill="none" stroke="#be3d43" stroke-width="2.0" stroke-linejoin="round" stroke-linecap="round"/>
<polyline points="359.66,323.93 359.66,360.11 363.85,364.3 367.19,364.3" fill="none" stroke="#be3d43" stroke-width="2.0" stroke-linejoin="round" stroke-linecap="round"/>
<polyline points="273.44,342.53 268.42,344.21 265.07,348.39 265.07,428.14 268.42,430.65 271.76,430.65" fill="none" stroke="#be3d43" stroke-width="2.0" stroke-linejoin="round" stroke-linecap="round"/>
<polyline points="279.8,367.65 279.8,405.32 286.0,410.56 308.6,410.56 314.46,417.25" fill="none" stroke="#be3d43" stroke-width="2.0" stroke-linejoin="round" stroke-linecap="round"/>
<polyline points="282.65,430.65 307.76,430.65" fill="none" stroke="#be3d43" stroke-width="2.0" stroke-linejoin="round" stroke-linecap="round"/>
<polyline points="319.48,430.65 326.18,429.81" fill="none" stroke="#be3d43" stroke-width="2.0" stroke-linejoin="round" stroke-linecap="round"/>
<polyline points="319.48,449.06 327.01,440.69 326.68,430.14" fill="none" stroke="#be3d43" stroke-width="2.0" stroke-linejoin="round" stroke-linecap="round"/>
<polyline points="328.69,458.61 348.78,458.61 374.73,432.32 405.07,430.14" fill="none" stroke="#be3d43" stroke-width="2.0" stroke-linejoin="round" stroke-linecap="round"/>
<polyline points="415.11,342.53 418,343" fill="none" stroke="#be3d43" stroke-width="2.0" stroke-linejoin="round" stroke-linecap="round"/>
<polyline points="415.11,364.3 418,364" fill="none" stroke="#be3d43" stroke-width="2.0" stroke-linejoin="round" stroke-linecap="round"/>
<polyline points="461.99,342.53 458.64,344.21 457.81,348.06 457.81,393.6 460.32,398.62 460.32,418.09 463.66,425.62 467.85,429.47" fill="none" stroke="#be3d43" stroke-width="2.0" stroke-linejoin="round" stroke-linecap="round"/>
<polyline points="473.71,364.3 480.07,365.47" fill="none" stroke="#be3d43" stroke-width="2.0" stroke-linejoin="round" stroke-linecap="round"/>
<polyline points="475.38,391.92 482.92,399.46 484.59,404.7 484.59,455.76 478.73,462.46 446.92,462.46 443.57,460.78 434.37,451.57 416.79,451.57" fill="none" stroke="#be3d43" stroke-width="2.0" stroke-linejoin="round" stroke-linecap="round"/>
<polyline points="382.26,451.57 404.23,451.57" fill="none" stroke="#be3d43" stroke-width="2.0" stroke-linejoin="round" stroke-linecap="round"/>
<polyline points="509.71,364.3 513.3,364.3" fill="none" stroke="#be3d43" stroke-width="2.0" stroke-linejoin="round" stroke-linecap="round"/>
<rect x="280.97" y="103.84" width="13.40" height="8.37" fill="#b8323a"  rx="0.8"/>
<rect x="281.87" y="104.64" width="11.60" height="6.77" fill="#e0353a"  rx="0.5"/>
<path d="M283.37,109.03 h8.60" stroke="#f08a8a" stroke-width="0.7" stroke-dasharray="1.6 0.9" opacity="0.75"/>
<rect x="280.97" y="117.24" width="13.40" height="8.87" fill="#b8323a"  rx="0.8"/>
<rect x="281.87" y="118.04" width="11.60" height="7.27" fill="#e0353a"  rx="0.5"/>
<path d="M283.37,122.74 h8.60" stroke="#f08a8a" stroke-width="0.7" stroke-dasharray="1.6 0.9" opacity="0.75"/>
<rect x="368.30" y="78.90" width="8.00" height="12.90" fill="#b8323a"  rx="3.2"/>
<rect x="369.70" y="80.10" width="5.00" height="10.40" fill="#e0353a"  rx="2.4"/>
<rect x="394.40" y="78.90" width="8.00" height="12.90" fill="#b8323a"  rx="3.2"/>
<rect x="395.80" y="80.10" width="5.00" height="10.40" fill="#e0353a"  rx="2.4"/>
<rect x="381.70" y="96.70" width="7.10" height="12.00" fill="#b8323a"  rx="3"/>
<rect x="383.00" y="97.90" width="4.50" height="9.60" fill="#e0353a"  rx="2.2"/>
<rect x="407.90" y="96.70" width="7.10" height="12.00" fill="#b8323a"  rx="3"/>
<rect x="409.20" y="97.90" width="4.50" height="9.60" fill="#e0353a"  rx="2.2"/>
<rect x="471.70" y="90.40" width="29.20" height="11.50" fill="none" stroke="#9a2f86" stroke-width="0.9" rx="1.5"/>
<rect x="473.70" y="92.20" width="6.60" height="8.50" fill="#e2332f"  rx="0.6"/>
<rect x="492.30" y="92.20" width="6.60" height="8.50" fill="#e2332f"  rx="0.6"/>
<rect x="481.20" y="92.60" width="10.20" height="7.60" fill="#0a0f1c" stroke="#7a3040" stroke-width="0.6" rx="0"/>
<text transform="translate(484.4,99)" font-size="6.59" fill="#c060c0" stroke="#c060c0" stroke-width="0.28" text-anchor="start" font-weight="normal">K</text>
<rect x="474.50" y="111.00" width="6.70" height="9.20" fill="#d8323a"  rx="0.6"/>
<rect x="490.50" y="111.00" width="6.70" height="9.20" fill="#d8323a"  rx="0.6"/>
<rect x="482.00" y="111.60" width="7.80" height="8.00" fill="#0a0f1c" stroke="#7a3040" stroke-width="0.6" rx="0"/>
<rect x="364.30" y="249.60" width="52.60" height="35.80" fill="none" stroke="#9a2f86" stroke-width="0.8" rx="0"/>
<polyline points="374.70000000000005,275.2 374.70000000000005,261.8" fill="none" stroke="#7f8c90" stroke-width="0.6" stroke-linejoin="round" stroke-linecap="round"/>
<polyline points="406.7,275.2 406.7,261.8" fill="none" stroke="#7f8c90" stroke-width="0.6" stroke-linejoin="round" stroke-linecap="round"/>
<polyline points="383.1,252.0 397.7,252.0" fill="none" stroke="#6f8a88" stroke-width="0.9" stroke-linejoin="round" stroke-linecap="round"/>
<polyline points="383.1,283.6 397.7,283.6" fill="none" stroke="#6f8a88" stroke-width="0.9" stroke-linejoin="round" stroke-linecap="round"/>
<polyline points="379.1,258.0 401.7,258.0" fill="none" stroke="#be3d43" stroke-width="1.7" stroke-linejoin="round" stroke-linecap="round"/>
<rect x="366.10" y="254.20" width="13.00" height="7.60" fill="#b8323a"  rx="0.8"/>
<rect x="367.00" y="255.00" width="11.20" height="6.00" fill="#e0353a"  rx="0.5"/>
<path d="M368.5,258.91 h8.2" stroke="#f08a8a" stroke-width="0.7" stroke-dasharray="1.6 0.9" opacity="0.75"/>
<rect x="366.10" y="274.20" width="13.00" height="7.60" fill="#b8323a"  rx="0.8"/>
<rect x="367.00" y="275.00" width="11.20" height="6.00" fill="#e0353a"  rx="0.5"/>
<path d="M368.5,278.91 h8.2" stroke="#f08a8a" stroke-width="0.7" stroke-dasharray="1.6 0.9" opacity="0.75"/>
<rect x="401.70" y="254.20" width="13.00" height="7.60" fill="#b8323a"  rx="0.8"/>
<rect x="402.60" y="255.00" width="11.20" height="6.00" fill="#e0353a"  rx="0.5"/>
<path d="M404.09999999999997,258.91 h8.2" stroke="#f08a8a" stroke-width="0.7" stroke-dasharray="1.6 0.9" opacity="0.75"/>
<rect x="401.70" y="274.20" width="13.00" height="7.60" fill="#b8323a"  rx="0.8"/>
<rect x="402.60" y="275.00" width="11.20" height="6.00" fill="#e0353a"  rx="0.5"/>
<path d="M404.09999999999997,278.91 h8.2" stroke="#f08a8a" stroke-width="0.7" stroke-dasharray="1.6 0.9" opacity="0.75"/>
<rect x="271.50" y="334.00" width="53.00" height="37.00" fill="none" stroke="#9a2f86" stroke-width="0.8" rx="0"/>
<polyline points="281.90000000000003,360.8 281.90000000000003,346.20000000000005" fill="none" stroke="#7f8c90" stroke-width="0.6" stroke-linejoin="round" stroke-linecap="round"/>
<polyline points="314.3,360.8 314.3,346.20000000000005" fill="none" stroke="#7f8c90" stroke-width="0.6" stroke-linejoin="round" stroke-linecap="round"/>
<polyline points="290.3,336.40000000000003 305.3,336.40000000000003" fill="none" stroke="#6f8a88" stroke-width="0.9" stroke-linejoin="round" stroke-linecap="round"/>
<polyline points="290.3,369.20000000000005 305.3,369.20000000000005" fill="none" stroke="#6f8a88" stroke-width="0.9" stroke-linejoin="round" stroke-linecap="round"/>
<rect x="273.30" y="338.60" width="13.00" height="7.60" fill="#b8323a"  rx="0.8"/>
<rect x="274.20" y="339.40" width="11.20" height="6.00" fill="#e0353a"  rx="0.5"/>
<path d="M275.7,343.31 h8.2" stroke="#f08a8a" stroke-width="0.7" stroke-dasharray="1.6 0.9" opacity="0.75"/>
<rect x="273.30" y="359.80" width="13.00" height="7.60" fill="#b8323a"  rx="0.8"/>
<rect x="274.20" y="360.60" width="11.20" height="6.00" fill="#e0353a"  rx="0.5"/>
<path d="M275.7,364.51 h8.2" stroke="#f08a8a" stroke-width="0.7" stroke-dasharray="1.6 0.9" opacity="0.75"/>
<rect x="309.30" y="338.60" width="13.00" height="7.60" fill="#b8323a"  rx="0.8"/>
<rect x="310.20" y="339.40" width="11.20" height="6.00" fill="#e0353a"  rx="0.5"/>
<path d="M311.7,343.31 h8.2" stroke="#f08a8a" stroke-width="0.7" stroke-dasharray="1.6 0.9" opacity="0.75"/>
<rect x="309.30" y="359.80" width="13.00" height="7.60" fill="#b8323a"  rx="0.8"/>
<rect x="310.20" y="360.60" width="11.20" height="6.00" fill="#e0353a"  rx="0.5"/>
<path d="M311.7,364.51 h8.2" stroke="#f08a8a" stroke-width="0.7" stroke-dasharray="1.6 0.9" opacity="0.75"/>
<rect x="364.40" y="334.60" width="52.60" height="36.40" fill="none" stroke="#9a2f86" stroke-width="0.8" rx="0"/>
<polyline points="374.8,360.8 374.8,346.8" fill="none" stroke="#7f8c90" stroke-width="0.6" stroke-linejoin="round" stroke-linecap="round"/>
<polyline points="406.8,360.8 406.8,346.8" fill="none" stroke="#7f8c90" stroke-width="0.6" stroke-linejoin="round" stroke-linecap="round"/>
<polyline points="383.2,337.0 397.8,337.0" fill="none" stroke="#6f8a88" stroke-width="0.9" stroke-linejoin="round" stroke-linecap="round"/>
<polyline points="383.2,369.20000000000005 397.8,369.20000000000005" fill="none" stroke="#6f8a88" stroke-width="0.9" stroke-linejoin="round" stroke-linecap="round"/>
<polyline points="379.2,343.0 401.8,343.0" fill="none" stroke="#be3d43" stroke-width="1.7" stroke-linejoin="round" stroke-linecap="round"/>
<polyline points="379.2,363.6 401.8,363.6" fill="none" stroke="#be3d43" stroke-width="1.7" stroke-linejoin="round" stroke-linecap="round"/>
<rect x="366.20" y="339.20" width="13.00" height="7.60" fill="#b8323a"  rx="0.8"/>
<rect x="367.10" y="340.00" width="11.20" height="6.00" fill="#e0353a"  rx="0.5"/>
<path d="M368.59999999999997,343.91 h8.2" stroke="#f08a8a" stroke-width="0.7" stroke-dasharray="1.6 0.9" opacity="0.75"/>
<rect x="366.20" y="359.80" width="13.00" height="7.60" fill="#b8323a"  rx="0.8"/>
<rect x="367.10" y="360.60" width="11.20" height="6.00" fill="#e0353a"  rx="0.5"/>
<path d="M368.59999999999997,364.51 h8.2" stroke="#f08a8a" stroke-width="0.7" stroke-dasharray="1.6 0.9" opacity="0.75"/>
<rect x="401.80" y="339.20" width="13.00" height="7.60" fill="#b8323a"  rx="0.8"/>
<rect x="402.70" y="340.00" width="11.20" height="6.00" fill="#e0353a"  rx="0.5"/>
<path d="M404.2,343.91 h8.2" stroke="#f08a8a" stroke-width="0.7" stroke-dasharray="1.6 0.9" opacity="0.75"/>
<rect x="401.80" y="359.80" width="13.00" height="7.60" fill="#b8323a"  rx="0.8"/>
<rect x="402.70" y="360.60" width="11.20" height="6.00" fill="#e0353a"  rx="0.5"/>
<path d="M404.2,364.51 h8.2" stroke="#f08a8a" stroke-width="0.7" stroke-dasharray="1.6 0.9" opacity="0.75"/>
<rect x="460.20" y="334.60" width="52.60" height="36.80" fill="none" stroke="#9a2f86" stroke-width="0.8" rx="0"/>
<polyline points="470.6,361.2 470.6,346.8" fill="none" stroke="#7f8c90" stroke-width="0.6" stroke-linejoin="round" stroke-linecap="round"/>
<polyline points="502.6,361.2 502.6,346.8" fill="none" stroke="#7f8c90" stroke-width="0.6" stroke-linejoin="round" stroke-linecap="round"/>
<polyline points="479,337.0 493.6,337.0" fill="none" stroke="#6f8a88" stroke-width="0.9" stroke-linejoin="round" stroke-linecap="round"/>
<polyline points="479,369.6 493.6,369.6" fill="none" stroke="#6f8a88" stroke-width="0.9" stroke-linejoin="round" stroke-linecap="round"/>
<polyline points="475,343.0 497.6,343.0" fill="none" stroke="#be3d43" stroke-width="1.7" stroke-linejoin="round" stroke-linecap="round"/>
<rect x="462.00" y="339.20" width="13.00" height="7.60" fill="#b8323a"  rx="0.8"/>
<rect x="462.90" y="340.00" width="11.20" height="6.00" fill="#e0353a"  rx="0.5"/>
<path d="M464.4,343.91 h8.2" stroke="#f08a8a" stroke-width="0.7" stroke-dasharray="1.6 0.9" opacity="0.75"/>
<rect x="462.00" y="360.20" width="13.00" height="7.60" fill="#b8323a"  rx="0.8"/>
<rect x="462.90" y="361.00" width="11.20" height="6.00" fill="#e0353a"  rx="0.5"/>
<path d="M464.4,364.91 h8.2" stroke="#f08a8a" stroke-width="0.7" stroke-dasharray="1.6 0.9" opacity="0.75"/>
<rect x="497.60" y="339.20" width="13.00" height="7.60" fill="#b8323a"  rx="0.8"/>
<rect x="498.50" y="340.00" width="11.20" height="6.00" fill="#e0353a"  rx="0.5"/>
<path d="M500.0,343.91 h8.2" stroke="#f08a8a" stroke-width="0.7" stroke-dasharray="1.6 0.9" opacity="0.75"/>
<rect x="497.60" y="360.20" width="13.00" height="7.60" fill="#b8323a"  rx="0.8"/>
<rect x="498.50" y="361.00" width="11.20" height="6.00" fill="#e0353a"  rx="0.5"/>
<path d="M500.0,364.91 h8.2" stroke="#f08a8a" stroke-width="0.7" stroke-dasharray="1.6 0.9" opacity="0.75"/>
<rect x="268.90" y="422.70" width="53.00" height="36.00" fill="none" stroke="#9a2f86" stroke-width="0.8" rx="0"/>
<polyline points="279.3,449.2 279.3,434.2" fill="none" stroke="#7f8c90" stroke-width="0.6" stroke-linejoin="round" stroke-linecap="round"/>
<polyline points="311.7,449.2 311.7,434.2" fill="none" stroke="#7f8c90" stroke-width="0.6" stroke-linejoin="round" stroke-linecap="round"/>
<polyline points="287.7,425.1 302.7,425.1" fill="none" stroke="#6f8a88" stroke-width="0.9" stroke-linejoin="round" stroke-linecap="round"/>
<polyline points="287.7,456.9 302.7,456.9" fill="none" stroke="#6f8a88" stroke-width="0.9" stroke-linejoin="round" stroke-linecap="round"/>
<polyline points="283.7,430.75 306.7,430.75" fill="none" stroke="#be3d43" stroke-width="1.7" stroke-linejoin="round" stroke-linecap="round"/>
<rect x="270.70" y="427.30" width="13.00" height="6.90" fill="#b8323a"  rx="0.8"/>
<rect x="271.60" y="428.10" width="11.20" height="5.30" fill="#e0353a"  rx="0.5"/>
<path d="M273.09999999999997,431.58 h8.2" stroke="#f08a8a" stroke-width="0.7" stroke-dasharray="1.6 0.9" opacity="0.75"/>
<rect x="270.70" y="448.20" width="13.00" height="6.90" fill="#b8323a"  rx="0.8"/>
<rect x="271.60" y="449.00" width="11.20" height="5.30" fill="#e0353a"  rx="0.5"/>
<path d="M273.09999999999997,452.48 h8.2" stroke="#f08a8a" stroke-width="0.7" stroke-dasharray="1.6 0.9" opacity="0.75"/>
<rect x="306.70" y="427.30" width="13.00" height="6.90" fill="#b8323a"  rx="0.8"/>
<rect x="307.60" y="428.10" width="11.20" height="5.30" fill="#e0353a"  rx="0.5"/>
<path d="M309.09999999999997,431.58 h8.2" stroke="#f08a8a" stroke-width="0.7" stroke-dasharray="1.6 0.9" opacity="0.75"/>
<rect x="306.70" y="448.20" width="13.00" height="6.90" fill="#b8323a"  rx="0.8"/>
<rect x="307.60" y="449.00" width="11.20" height="5.30" fill="#e0353a"  rx="0.5"/>
<path d="M309.09999999999997,452.48 h8.2" stroke="#f08a8a" stroke-width="0.7" stroke-dasharray="1.6 0.9" opacity="0.75"/>
<rect x="367.40" y="421.80" width="52.60" height="36.80" fill="none" stroke="#9a2f86" stroke-width="0.8" rx="0"/>
<polyline points="377.8,448.8 377.8,433.59999999999997" fill="none" stroke="#7f8c90" stroke-width="0.6" stroke-linejoin="round" stroke-linecap="round"/>
<polyline points="409.8,448.8 409.8,433.59999999999997" fill="none" stroke="#7f8c90" stroke-width="0.6" stroke-linejoin="round" stroke-linecap="round"/>
<polyline points="386.2,424.2 400.8,424.2" fill="none" stroke="#6f8a88" stroke-width="0.9" stroke-linejoin="round" stroke-linecap="round"/>
<polyline points="386.2,456.8 400.8,456.8" fill="none" stroke="#6f8a88" stroke-width="0.9" stroke-linejoin="round" stroke-linecap="round"/>
<polyline points="382.2,430.0 404.8,430.0" fill="none" stroke="#be3d43" stroke-width="1.7" stroke-linejoin="round" stroke-linecap="round"/>
<polyline points="382.2,451.40000000000003 404.8,451.40000000000003" fill="none" stroke="#be3d43" stroke-width="1.7" stroke-linejoin="round" stroke-linecap="round"/>
<rect x="369.20" y="426.40" width="13.00" height="7.20" fill="#b8323a"  rx="0.8"/>
<rect x="370.10" y="427.20" width="11.20" height="5.60" fill="#e0353a"  rx="0.5"/>
<path d="M371.59999999999997,430.86 h8.2" stroke="#f08a8a" stroke-width="0.7" stroke-dasharray="1.6 0.9" opacity="0.75"/>
<rect x="369.20" y="447.80" width="13.00" height="7.20" fill="#b8323a"  rx="0.8"/>
<rect x="370.10" y="448.60" width="11.20" height="5.60" fill="#e0353a"  rx="0.5"/>
<path d="M371.59999999999997,452.26 h8.2" stroke="#f08a8a" stroke-width="0.7" stroke-dasharray="1.6 0.9" opacity="0.75"/>
<rect x="404.80" y="426.40" width="13.00" height="7.20" fill="#b8323a"  rx="0.8"/>
<rect x="405.70" y="427.20" width="11.20" height="5.60" fill="#e0353a"  rx="0.5"/>
<path d="M407.2,430.86 h8.2" stroke="#f08a8a" stroke-width="0.7" stroke-dasharray="1.6 0.9" opacity="0.75"/>
<rect x="404.80" y="447.80" width="13.00" height="7.20" fill="#b8323a"  rx="0.8"/>
<rect x="405.70" y="448.60" width="11.20" height="5.60" fill="#e0353a"  rx="0.5"/>
<path d="M407.2,452.26 h8.2" stroke="#f08a8a" stroke-width="0.7" stroke-dasharray="1.6 0.9" opacity="0.75"/>
<circle cx="384.3" cy="434.9" r="2.6" fill="#4d7fc4"/>
<circle cx="396.8" cy="434.9" r="2.6" fill="#4d7fc4"/>
<circle cx="384.3" cy="447.3" r="2.6" fill="#4d7fc4"/>
<circle cx="396.8" cy="447.3" r="2.6" fill="#4d7fc4"/>
<path d="M363.6,426.6 V437.6 M365.2,426.6 V437.6 M366.8,426.6 V437.6 M363.6,446 V457 M365.2,446 V457 M366.8,446 V457" stroke="#8a96a2" stroke-width="0.6" stroke-dasharray="1.2 0.8"/>
<rect x="338.00" y="361.10" width="9.10" height="7.40" fill="#6a90e0"  rx="0.6"/>
<circle cx="350.8" cy="364.8" r="3.5" fill="#2a1410" stroke="#c0503a" stroke-width="1.3"/><circle cx="350.8" cy="364.8" r="1.3" fill="#050505"/>
<rect x="433.00" y="361.10" width="6.80" height="7.40" fill="#6a90e0"  rx="0.6"/>
<circle cx="428.7" cy="364.8" r="3.5" fill="#2a1410" stroke="#c0503a" stroke-width="1.3"/><circle cx="428.7" cy="364.8" r="1.3" fill="#050505"/>
<rect x="338.00" y="374.50" width="9.10" height="7.40" fill="#6a90e0"  rx="0.6"/>
<circle cx="350.8" cy="378.2" r="3.5" fill="#2a1410" stroke="#c0503a" stroke-width="1.3"/><circle cx="350.8" cy="378.2" r="1.3" fill="#050505"/>
<rect x="433.00" y="374.50" width="6.80" height="7.40" fill="#6a90e0"  rx="0.6"/>
<circle cx="428.7" cy="378.2" r="3.5" fill="#2a1410" stroke="#c0503a" stroke-width="1.3"/><circle cx="428.7" cy="378.2" r="1.3" fill="#050505"/>
<rect x="338.00" y="387.40" width="9.10" height="7.40" fill="#6a90e0"  rx="0.6"/>
<circle cx="350.8" cy="391.1" r="3.5" fill="#2a1410" stroke="#c0503a" stroke-width="1.3"/><circle cx="350.8" cy="391.1" r="1.3" fill="#050505"/>
<rect x="433.00" y="387.40" width="6.80" height="7.40" fill="#6a90e0"  rx="0.6"/>
<circle cx="428.7" cy="391.1" r="3.5" fill="#2a1410" stroke="#c0503a" stroke-width="1.3"/><circle cx="428.7" cy="391.1" r="1.3" fill="#050505"/>
<rect x="338.00" y="400.30" width="9.10" height="7.40" fill="#6a90e0"  rx="0.6"/>
<circle cx="350.8" cy="404" r="3.5" fill="#2a1410" stroke="#c0503a" stroke-width="1.3"/><circle cx="350.8" cy="404" r="1.3" fill="#050505"/>
<rect x="433.00" y="400.30" width="6.80" height="7.40" fill="#6a90e0"  rx="0.6"/>
<circle cx="428.7" cy="404" r="3.5" fill="#2a1410" stroke="#c0503a" stroke-width="1.3"/><circle cx="428.7" cy="404" r="1.3" fill="#050505"/>
<rect x="338.00" y="413.60" width="9.10" height="7.40" fill="#6a90e0"  rx="0.6"/>
<circle cx="350.8" cy="417.3" r="3.5" fill="#2a1410" stroke="#c0503a" stroke-width="1.3"/><circle cx="350.8" cy="417.3" r="1.3" fill="#050505"/>
<rect x="433.00" y="413.60" width="6.80" height="7.40" fill="#6a90e0"  rx="0.6"/>
<circle cx="428.7" cy="417.3" r="3.5" fill="#2a1410" stroke="#c0503a" stroke-width="1.3"/><circle cx="428.7" cy="417.3" r="1.3" fill="#050505"/>
<rect x="338.00" y="426.10" width="9.10" height="7.40" fill="#6a90e0"  rx="0.6"/>
<circle cx="350.8" cy="429.8" r="3.5" fill="#2a1410" stroke="#c0503a" stroke-width="1.3"/><circle cx="350.8" cy="429.8" r="1.3" fill="#050505"/>
<rect x="433.00" y="426.10" width="6.80" height="7.40" fill="#6a90e0"  rx="0.6"/>
<circle cx="428.7" cy="429.8" r="3.5" fill="#2a1410" stroke="#c0503a" stroke-width="1.3"/><circle cx="428.7" cy="429.8" r="1.3" fill="#050505"/>
<rect x="338.00" y="439.50" width="9.10" height="7.40" fill="#6a90e0"  rx="0.6"/>
<circle cx="350.8" cy="443.2" r="3.5" fill="#2a1410" stroke="#c0503a" stroke-width="1.3"/><circle cx="350.8" cy="443.2" r="1.3" fill="#050505"/>
<rect x="433.00" y="439.50" width="6.80" height="7.40" fill="#6a90e0"  rx="0.6"/>
<circle cx="428.7" cy="443.2" r="3.5" fill="#2a1410" stroke="#c0503a" stroke-width="1.3"/><circle cx="428.7" cy="443.2" r="1.3" fill="#050505"/>
<circle cx="392.1" cy="113.1" r="3.1" fill="#e08a22"/><circle cx="392.1" cy="113.1" r="2.23" fill="#f0ac28"/><circle cx="392.1" cy="113.1" r="1.24" fill="#f6c034"/>
<circle cx="385.28" cy="145.93" r="3.1" fill="#e08a22"/><circle cx="385.28" cy="145.93" r="2.23" fill="#f0ac28"/><circle cx="385.28" cy="145.93" r="1.24" fill="#f6c034"/>
<circle cx="321.8" cy="170.2" r="3.1" fill="#e08a22"/><circle cx="321.8" cy="170.2" r="2.23" fill="#f0ac28"/><circle cx="321.8" cy="170.2" r="1.24" fill="#f6c034"/>
<circle cx="294.87" cy="201.18" r="3.1" fill="#e08a22"/><circle cx="294.87" cy="201.18" r="2.23" fill="#f0ac28"/><circle cx="294.87" cy="201.18" r="1.24" fill="#f6c034"/>
<circle cx="466.18" cy="127.51" r="3.1" fill="#e08a22"/><circle cx="466.18" cy="127.51" r="2.23" fill="#f0ac28"/><circle cx="466.18" cy="127.51" r="1.24" fill="#f6c034"/>
<circle cx="420.97" cy="157.65" r="3.1" fill="#e08a22"/><circle cx="420.97" cy="157.65" r="2.23" fill="#f0ac28"/><circle cx="420.97" cy="157.65" r="1.24" fill="#f6c034"/>
<circle cx="436.04" cy="157.31" r="3.1" fill="#e08a22"/><circle cx="436.04" cy="157.31" r="2.23" fill="#f0ac28"/><circle cx="436.04" cy="157.31" r="1.24" fill="#f6c034"/>
<circle cx="440.73" cy="178.91" r="3.1" fill="#e08a22"/><circle cx="440.73" cy="178.91" r="2.23" fill="#f0ac28"/><circle cx="440.73" cy="178.91" r="1.24" fill="#f6c034"/>
<circle cx="321.15" cy="232.67" r="3.1" fill="#e08a22"/><circle cx="321.15" cy="232.67" r="2.23" fill="#f0ac28"/><circle cx="321.15" cy="232.67" r="1.24" fill="#f6c034"/>
<circle cx="359.66" cy="213.75" r="3.1" fill="#e08a22"/><circle cx="359.66" cy="213.75" r="2.23" fill="#f0ac28"/><circle cx="359.66" cy="213.75" r="1.24" fill="#f6c034"/>
<circle cx="373.05" cy="233.84" r="3.1" fill="#e08a22"/><circle cx="373.05" cy="233.84" r="2.23" fill="#f0ac28"/><circle cx="373.05" cy="233.84" r="1.24" fill="#f6c034"/>
<circle cx="419.8" cy="229.32" r="3.1" fill="#e08a22"/><circle cx="419.8" cy="229.32" r="2.23" fill="#f0ac28"/><circle cx="419.8" cy="229.32" r="1.24" fill="#f6c034"/>
<circle cx="411.76" cy="242.38" r="3.1" fill="#e08a22"/><circle cx="411.76" cy="242.38" r="2.23" fill="#f0ac28"/><circle cx="411.76" cy="242.38" r="1.24" fill="#f6c034"/>
<circle cx="428.17" cy="243.55" r="3.1" fill="#e08a22"/><circle cx="428.17" cy="243.55" r="2.23" fill="#f0ac28"/><circle cx="428.17" cy="243.55" r="1.24" fill="#f6c034"/>
<circle cx="288.17" cy="282.24" r="3.1" fill="#e08a22"/><circle cx="288.17" cy="282.24" r="2.23" fill="#f0ac28"/><circle cx="288.17" cy="282.24" r="1.24" fill="#f6c034"/>
<circle cx="359.66" cy="323.93" r="3.1" fill="#e08a22"/><circle cx="359.66" cy="323.93" r="2.23" fill="#f0ac28"/><circle cx="359.66" cy="323.93" r="1.24" fill="#f6c034"/>
<circle cx="391.67" cy="323.93" r="3.1" fill="#e08a22"/><circle cx="391.67" cy="323.93" r="2.23" fill="#f0ac28"/><circle cx="391.67" cy="323.93" r="1.24" fill="#f6c034"/>
<circle cx="431.86" cy="342.85" r="3.1" fill="#e08a22"/><circle cx="431.86" cy="342.85" r="2.23" fill="#f0ac28"/><circle cx="431.86" cy="342.85" r="1.24" fill="#f6c034"/>
<circle cx="328.35" cy="378.19" r="3.1" fill="#e08a22"/><circle cx="328.35" cy="378.19" r="2.23" fill="#f0ac28"/><circle cx="328.35" cy="378.19" r="1.24" fill="#f6c034"/>
<circle cx="308.09" cy="391.09" r="3.1" fill="#e08a22"/><circle cx="308.09" cy="391.09" r="2.23" fill="#f0ac28"/><circle cx="308.09" cy="391.09" r="1.24" fill="#f6c034"/>
<circle cx="480.07" cy="365.47" r="3.1" fill="#e08a22"/><circle cx="480.07" cy="365.47" r="2.23" fill="#f0ac28"/><circle cx="480.07" cy="365.47" r="1.24" fill="#f6c034"/>
<circle cx="496.31" cy="380.54" r="3.1" fill="#e08a22"/><circle cx="496.31" cy="380.54" r="2.23" fill="#f0ac28"/><circle cx="496.31" cy="380.54" r="1.24" fill="#f6c034"/>
<circle cx="475.38" cy="391.92" r="3.1" fill="#e08a22"/><circle cx="475.38" cy="391.92" r="2.23" fill="#f0ac28"/><circle cx="475.38" cy="391.92" r="1.24" fill="#f6c034"/>
<circle cx="451.61" cy="399.12" r="3.1" fill="#e08a22"/><circle cx="451.61" cy="399.12" r="2.23" fill="#f0ac28"/><circle cx="451.61" cy="399.12" r="1.24" fill="#f6c034"/>
<circle cx="314.46" cy="417.25" r="3.1" fill="#e08a22"/><circle cx="314.46" cy="417.25" r="2.23" fill="#f0ac28"/><circle cx="314.46" cy="417.25" r="1.24" fill="#f6c034"/>
<circle cx="326.18" cy="429.81" r="3.1" fill="#e08a22"/><circle cx="326.18" cy="429.81" r="2.23" fill="#f0ac28"/><circle cx="326.18" cy="429.81" r="1.24" fill="#f6c034"/>
<circle cx="328.35" cy="446.05" r="3.1" fill="#e08a22"/><circle cx="328.35" cy="446.05" r="2.23" fill="#f0ac28"/><circle cx="328.35" cy="446.05" r="1.24" fill="#f6c034"/>
<circle cx="328.69" cy="458.61" r="3.1" fill="#e08a22"/><circle cx="328.69" cy="458.61" r="2.23" fill="#f0ac28"/><circle cx="328.69" cy="458.61" r="1.24" fill="#f6c034"/>
<circle cx="467.85" cy="429.47" r="3.1" fill="#e08a22"/><circle cx="467.85" cy="429.47" r="2.23" fill="#f0ac28"/><circle cx="467.85" cy="429.47" r="1.24" fill="#f6c034"/>
<circle cx="447.43" cy="455.76" r="3.1" fill="#e08a22"/><circle cx="447.43" cy="455.76" r="2.23" fill="#f0ac28"/><circle cx="447.43" cy="455.76" r="1.24" fill="#f6c034"/>
<path d="M490.9,165.2 h3.2 M492.5,163.6 v3.2" stroke="#b040b0" stroke-width="0.6"/>
<path d="M490.59999999999997,236 h3.2 M492.2,234.4 v3.2" stroke="#b040b0" stroke-width="0.6"/>
<path d="M285.0,237.4 h3.2 M286.6,235.8 v3.2" stroke="#b040b0" stroke-width="0.6"/>
<path d="M285.2,164.4 h3.2 M286.8,162.8 v3.2" stroke="#b040b0" stroke-width="0.6"/>
<path d="M451,144 l3,3 M454,144 l-3,3" stroke="#e8e8e8" stroke-width="0.6"/>
<text transform="translate(481.4,89.5)" font-size="7.2" fill="#e4e2b8" stroke="#e4e2b8" stroke-width="0.28" text-anchor="start" font-weight="normal" textLength="8.8" lengthAdjust="spacingAndGlyphs">D1</text>
<text transform="translate(467.8,109.2)" font-size="8.54" fill="#e4e4e4" stroke="#e4e4e4" stroke-width="0.28" text-anchor="start" font-weight="normal" textLength="36.8" lengthAdjust="spacingAndGlyphs">LED_1206</text>
<text transform="translate(481.6,109.2)" font-size="8.54" fill="#e4e2b8" stroke="#e4e2b8" stroke-width="0.28" text-anchor="start" font-weight="normal" textLength="8.8" lengthAdjust="spacingAndGlyphs">R1</text>
<text transform="translate(472.4,128.2)" font-size="7.81" fill="#b8c8e0" stroke="#b8c8e0" stroke-width="0.28" text-anchor="start" font-weight="normal" textLength="36.0" lengthAdjust="spacingAndGlyphs" opacity="0.8">R_1206</text>
<text transform="translate(486.3,188.6)" font-size="8.05" fill="#e4e2b8" stroke="#e4e2b8" stroke-width="0.28" text-anchor="start" font-weight="normal" textLength="14.4" lengthAdjust="spacingAndGlyphs">SW2</text>
<text transform="translate(296,258.4)" font-size="7.81" fill="#e4e4e4" stroke="#e4e4e4" stroke-width="0.28" text-anchor="start" font-weight="normal" textLength="9.4" lengthAdjust="spacingAndGlyphs">UP</text>
<text transform="translate(383.2,250.2)" font-size="8.3" fill="#e4e2b8" stroke="#e4e2b8" stroke-width="0.28" text-anchor="start" font-weight="normal" textLength="15.0" lengthAdjust="spacingAndGlyphs">SW3</text>
<circle cx="390.6" cy="268" r="8.4" fill="none" stroke="#aab4be" stroke-width="0.7"/>
<text transform="translate(383.4,270.6)" font-size="7.81" fill="#e4e4e4" stroke="#e4e4e4" stroke-width="0.28" text-anchor="start" font-weight="normal" textLength="14.6" lengthAdjust="spacingAndGlyphs">SW3</text>
<text transform="translate(328.35,261.13) rotate(-90)" font-size="6.83" fill="#e4e4e4" stroke="#e4e4e4" stroke-width="0.28" text-anchor="start" font-weight="normal" textLength="13.0" lengthAdjust="spacingAndGlyphs">C10</text>
<text transform="translate(383,330.3)" font-size="8.3" fill="#e4e2b8" stroke="#e4e2b8" stroke-width="0.28" text-anchor="start" font-weight="normal" textLength="15.2" lengthAdjust="spacingAndGlyphs">SW6</text>
<circle cx="298.2" cy="352.7" r="8.3" fill="none" stroke="#aab4be" stroke-width="0.7"/>
<text transform="translate(291.86,355.43)" font-size="6.83" fill="#aab4be" stroke="#aab4be" stroke-width="0.28" text-anchor="start" font-weight="normal" textLength="12.6" lengthAdjust="spacingAndGlyphs">SW7</text>
<text transform="translate(290.2,378.5)" font-size="7.81" fill="#e4e4e4" stroke="#e4e4e4" stroke-width="0.28" text-anchor="start" font-weight="normal" textLength="16.0" lengthAdjust="spacingAndGlyphs">LEFT</text>
<circle cx="391.2" cy="353.6" r="8.2" fill="none" stroke="#aab4be" stroke-width="0.7"/>
<text transform="translate(383,359.6)" font-size="8.05" fill="#f0f0f0" stroke="#f0f0f0" stroke-width="0.28" text-anchor="start" font-weight="normal" textLength="15.0" lengthAdjust="spacingAndGlyphs">SW6</text>
<text transform="translate(378.8,378.8)" font-size="8.05" fill="#e4e4e4" stroke="#e4e4e4" stroke-width="0.28" text-anchor="start" font-weight="normal" textLength="22.0" lengthAdjust="spacingAndGlyphs">PAUSE</text>
<text transform="translate(477.9,335.3)" font-size="8.3" fill="#e4e2b8" stroke="#e4e2b8" stroke-width="0.28" text-anchor="start" font-weight="normal" textLength="16.0" lengthAdjust="spacingAndGlyphs">SW4</text>
<circle cx="485.6" cy="352.6" r="8.4" fill="none" stroke="#aab4be" stroke-width="0.7"/>
<text transform="translate(478.73,355.43)" font-size="7.81" fill="#e4e4e4" stroke="#e4e4e4" stroke-width="0.28" text-anchor="start" font-weight="normal" textLength="15.0" lengthAdjust="spacingAndGlyphs">SW4</text>
<text transform="translate(475.4,378.9)" font-size="7.81" fill="#e4e4e4" stroke="#e4e4e4" stroke-width="0.28" text-anchor="start" font-weight="normal" textLength="21.0" lengthAdjust="spacingAndGlyphs">RIGHT</text>
<text transform="translate(280.1,424.8)" font-size="8.3" fill="#e4e2b8" stroke="#e4e2b8" stroke-width="0.28" text-anchor="start" font-weight="normal" textLength="15.2" lengthAdjust="spacingAndGlyphs">SW5</text>
<circle cx="295.1" cy="441.1" r="8.8" fill="none" stroke="#aab4be" stroke-width="0.7"/>
<text transform="translate(286,465.8)" font-size="7.81" fill="#e4e4e4" stroke="#e4e4e4" stroke-width="0.28" text-anchor="start" font-weight="normal" textLength="19.4" lengthAdjust="spacingAndGlyphs">MENU</text>
<text transform="translate(385.61,423.11)" font-size="8.3" fill="#e4e2b8" stroke="#e4e2b8" stroke-width="0.28" text-anchor="start" font-weight="normal" textLength="15.0" lengthAdjust="spacingAndGlyphs">SW1</text>
<text transform="translate(385.95,413.9)" font-size="7.56" fill="#e4e4e4" stroke="#e4e4e4" stroke-width="0.28" text-anchor="start" font-weight="normal" textLength="9.0" lengthAdjust="spacingAndGlyphs">WT</text>
<circle cx="390.8" cy="441.1" r="8.4" fill="none" stroke="#aab4be" stroke-width="0.7"/>
<text transform="translate(385.95,444.04)" font-size="7.81" fill="#e4e4e4" stroke="#e4e4e4" stroke-width="0.28" text-anchor="start" font-weight="normal" textLength="15.0" lengthAdjust="spacingAndGlyphs">SW1</text>
<text transform="translate(383.1,466.31)" font-size="7.81" fill="#e4e4e4" stroke="#e4e4e4" stroke-width="0.28" text-anchor="start" font-weight="normal" textLength="19.0" lengthAdjust="spacingAndGlyphs">DOWN</text>
<text transform="translate(463.4,449.6)" font-size="8.05" fill="#f0f0f0" stroke="#f0f0f0" stroke-width="0.28" text-anchor="start" font-weight="normal" textLength="6.6" lengthAdjust="spacingAndGlyphs">C2</text>
<text transform="translate(537.3,463.6) scale(-1,1)" font-size="7.81" fill="#6a7c9c" stroke="#6a7c9c" stroke-width="0.28" text-anchor="start" font-weight="normal" textLength="92.0" lengthAdjust="spacingAndGlyphs">Conn_01x07_Socket</text>
<text transform="translate(340,393.4) scale(1,-1)" font-size="8.54" fill="#56688a" stroke="#56688a" stroke-width="0.28" text-anchor="start" font-weight="normal" textLength="92.0" lengthAdjust="spacingAndGlyphs">Seeed_Studio_XIAO-RP2040</text>
<polyline points="336.72,418.38 336.72,349.23 400.01,349.23" fill="none" stroke="#7f8f9f" stroke-width="0.7" stroke-linejoin="round" stroke-linecap="round"/>
<polyline points="336.72,398.0 336.72,467.48" fill="none" stroke="#7f8f9f" stroke-width="0.7" stroke-linejoin="round" stroke-linecap="round"/>
<polyline points="344.59,415.03 344.59,353.42 348.78,349.73 400.01,349.73" fill="none" stroke="#7f8f9f" stroke-width="0.6" stroke-linejoin="round" stroke-linecap="round"/>
<polyline points="344.59,398.0 344.59,453.25 350.45,459.95 400.01,459.95" fill="none" stroke="#7f8f9f" stroke-width="0.6" stroke-linejoin="round" stroke-linecap="round"/>
<polyline points="421.81,349.23 443.24,349.23 443.24,467.48" fill="none" stroke="#7f8f9f" stroke-width="0.7" stroke-linejoin="round" stroke-linecap="round"/>
<polyline points="436.04,349.23 436.04,453.25 430.18,459.11 390.0,459.11" fill="none" stroke="#7f8f9f" stroke-width="0.6" stroke-linejoin="round" stroke-linecap="round"/>
<polyline points="366.36,423.11 366.36,467.48" fill="none" stroke="#7f8f9f" stroke-width="0.7" stroke-linejoin="round" stroke-linecap="round"/>
<polyline points="413.44,460.78 413.44,466.64" fill="none" stroke="#7f8f9f" stroke-width="0.7" stroke-linejoin="round" stroke-linecap="round"/>
<polyline points="292.2,372 292.2,424" fill="none" stroke="#7f8f9f" stroke-width="0.6" stroke-linejoin="round" stroke-linecap="round" opacity="0.8"/>
<polyline points="301.6,372 301.6,424" fill="none" stroke="#7f8f9f" stroke-width="0.6" stroke-linejoin="round" stroke-linecap="round" opacity="0.8"/>
<rect x="483.40" y="357.30" width="32.60" height="98.50" fill="none" stroke="#7f8f9f" stroke-width="0.7" rx="0"/>
<rect x="492.60" y="357.30" width="14.10" height="96.30" fill="none" stroke="#7f8f9f" stroke-width="0.7" rx="0"/></svg></div>
<div class="abs" style="left:781px;top:66.6px;width:2.2px;height:411.4px;background:#e6e6e6"></div>
<div id="panel"></div>
<div class="hdr" style="top:66.6px"></div>
<div class="abs" style="left:784.6px;top:80.4px;width:26px;height:13px;background:#fafafa"></div>
<div class="abs" style="left:783.4px;top:94.9px;width:114px;height:9.2px;background:#e2e2e2"></div>
<div class="abs" style="left:783.6px;top:330px;width:114.6px;height:12.4px;background:#fff"></div>
<div class="sel" style="top:359.6px"></div>
<div class="sel" style="top:384.4px"></div>
<div class="hdr" style="top:401.6px;height:11.4px"></div>
<div class="abs" style="left:0;top:473.8px;width:900px;height:4.2px;background:#f0f0f0"></div>
<span class="t" style="left:14.20px;top:2.52px;font-size:7.3px;color:#9a9a9a;transform:scaleX(0.9267)">*gameboy less goix — PCB Editor</span><span class="t" style="left:4.20px;top:15.54px;font-size:7.4px;color:#9a9a9a;transform:scaleX(0.8136)">File</span><span class="t" style="left:23.10px;top:15.54px;font-size:7.4px;color:#9a9a9a;transform:scaleX(0.9176)">Edit</span><span class="t" style="left:43.90px;top:15.54px;font-size:7.4px;color:#9a9a9a;transform:scaleX(0.9251)">View</span><span class="t" style="left:67.30px;top:15.54px;font-size:7.4px;color:#9a9a9a;transform:scaleX(0.8432)">Place</span><span class="t" style="left:92.10px;top:15.54px;font-size:7.4px;color:#9a9a9a;transform:scaleX(0.9070)">Route</span><span class="t" style="left:118.70px;top:15.54px;font-size:7.4px;color:#9a9a9a;transform:scaleX(0.9059)">Inspect</span><span class="t" style="left:149.00px;top:15.54px;font-size:7.4px;color:#9a9a9a;transform:scaleX(0.9267)">Tools</span><span class="t" style="left:174.00px;top:15.54px;font-size:7.4px;color:#9a9a9a;transform:scaleX(0.8781)">Preferences</span><span class="t" style="left:218.40px;top:15.54px;font-size:7.4px;color:#9a9a9a;transform:scaleX(0.9603)">Help</span><span class="t" style="left:4.60px;top:52.52px;font-size:7.3px;color:#222;transform:scaleX(0.9026)">Track: use netclass width</span><span class="t" style="left:119.90px;top:52.52px;font-size:7.3px;color:#222;transform:scaleX(0.8943)">Via: use netclass sizes</span><span class="t" style="left:223.70px;top:52.52px;font-size:7.3px;color:#222;transform:scaleX(0.9015)">F.Cu (PgUp)</span><span class="t" style="left:312.00px;top:52.52px;font-size:7.3px;color:#222;transform:scaleX(0.9419)">0.5000 mm (19.69 mils)</span><span class="t" style="left:415.80px;top:52.52px;font-size:7.3px;color:#222;transform:scaleX(0.9515)">Zoom 3.50</span><span class="t" style="left:785.30px;top:68.54px;font-size:8.1px;color:#222;transform:scaleX(0.8452)">Appearance</span><span class="t" style="left:786.80px;top:83.72px;font-size:7.3px;color:#222;transform:scaleX(0.8856)">Layers</span><span class="t" style="left:815.00px;top:83.72px;font-size:7.3px;color:#222;transform:scaleX(0.9374)">Objects</span><span class="t" style="left:844.50px;top:83.72px;font-size:7.3px;color:#222;transform:scaleX(0.8991)">Nets</span><span class="t" style="left:813.80px;top:96.01px;font-size:7.2px;color:#333;transform:scaleX(0.7577)">F.Cu</span><span class="t" style="left:813.80px;top:105.42px;font-size:7.2px;color:#333;transform:scaleX(0.7132)">B.Cu</span><span class="t" style="left:813.80px;top:114.83px;font-size:7.2px;color:#333;transform:scaleX(0.8188)">F.Adhesive</span><span class="t" style="left:813.80px;top:124.24px;font-size:7.2px;color:#333;transform:scaleX(0.8058)">B.Adhesive</span><span class="t" style="left:813.80px;top:133.66px;font-size:7.2px;color:#333;transform:scaleX(0.7927)">F.Paste</span><span class="t" style="left:813.80px;top:143.07px;font-size:7.2px;color:#333;transform:scaleX(0.7628)">B.Paste</span><span class="t" style="left:813.80px;top:152.48px;font-size:7.2px;color:#333;transform:scaleX(0.8026)">F.Silkscreen</span><span class="t" style="left:813.80px;top:161.90px;font-size:7.2px;color:#333;transform:scaleX(0.7859)">B.Silkscreen</span><span class="t" style="left:813.80px;top:171.31px;font-size:7.2px;color:#333;transform:scaleX(0.8346)">F.Mask</span><span class="t" style="left:813.80px;top:180.72px;font-size:7.2px;color:#333;transform:scaleX(0.8136)">B.Mask</span><span class="t" style="left:813.80px;top:190.14px;font-size:7.2px;color:#333;transform:scaleX(0.8366)">User.Drawings</span><span class="t" style="left:813.80px;top:199.55px;font-size:7.2px;color:#333;transform:scaleX(0.8383)">User.Comments</span><span class="t" style="left:813.80px;top:208.96px;font-size:7.2px;color:#333;transform:scaleX(0.8290)">User.Eco1</span><span class="t" style="left:813.80px;top:218.37px;font-size:7.2px;color:#333;transform:scaleX(0.8350)">User.Eco2</span><span class="t" style="left:813.80px;top:227.79px;font-size:7.2px;color:#333;transform:scaleX(0.8104)">Edge.Cuts</span><span class="t" style="left:813.80px;top:237.20px;font-size:7.2px;color:#333;transform:scaleX(0.9052)">Margin</span><span class="t" style="left:813.80px;top:246.61px;font-size:7.2px;color:#333;transform:scaleX(0.8451)">F.Courtyard</span><span class="t" style="left:813.80px;top:256.03px;font-size:7.2px;color:#333;transform:scaleX(0.8420)">B.Courtyard</span><span class="t" style="left:813.80px;top:265.44px;font-size:7.2px;color:#333;transform:scaleX(0.7896)">F.Fab</span><span class="t" style="left:813.80px;top:274.85px;font-size:7.2px;color:#333;transform:scaleX(0.7609)">B.Fab</span><span class="t" style="left:813.80px;top:284.27px;font-size:7.2px;color:#333;transform:scaleX(0.8277)">User.1</span><span class="t" style="left:813.80px;top:293.68px;font-size:7.2px;color:#333;transform:scaleX(0.8373)">User.2</span><span class="t" style="left:813.80px;top:303.09px;font-size:7.2px;color:#333;transform:scaleX(0.8373)">User.3</span><span class="t" style="left:813.80px;top:312.50px;font-size:7.2px;color:#333;transform:scaleX(0.8373)">User.4</span><span class="t" style="left:795.10px;top:332.51px;font-size:7.2px;color:#777;transform:scaleX(0.8405)">Layer Display Options</span><span class="t" style="left:786.80px;top:349.61px;font-size:7.2px;color:#222;transform:scaleX(0.8283)">Presets (Ctrl+Tab):</span><span class="t" style="left:786.80px;top:374.01px;font-size:7.2px;color:#222;transform:scaleX(0.8440)">Viewports (Shift+Tab):</span><span class="t" style="left:789.00px;top:361.51px;font-size:7.2px;color:#999;transform:scaleX(0.9739)">---</span><span class="t" style="left:789.00px;top:386.11px;font-size:7.2px;color:#999;transform:scaleX(0.9739)">---</span><span class="t" style="left:784.80px;top:403.43px;font-size:8.0px;color:#222;transform:scaleX(0.8730)">Selection Filter</span><span class="t" style="left:794.70px;top:417.11px;font-size:7.2px;color:#222;transform:scaleX(0.8170)">All items</span><span class="t" style="left:794.70px;top:426.54px;font-size:7.2px;color:#222;transform:scaleX(0.8540)">Footprints</span><span class="t" style="left:794.70px;top:435.97px;font-size:7.2px;color:#222;transform:scaleX(0.7748)">Tracks</span><span class="t" style="left:794.70px;top:445.40px;font-size:7.2px;color:#222;transform:scaleX(0.7565)">Pads</span><span class="t" style="left:794.70px;top:454.83px;font-size:7.2px;color:#222;transform:scaleX(0.8056)">Zones</span><span class="t" style="left:794.70px;top:464.26px;font-size:7.2px;color:#222;transform:scaleX(0.8253)">Dimensions</span><span class="t" style="left:843.90px;top:417.11px;font-size:7.2px;color:#222;transform:scaleX(0.8310)">Locked items</span><span class="t" style="left:843.90px;top:426.54px;font-size:7.2px;color:#222;transform:scaleX(0.8038)">Text</span><span class="t" style="left:843.90px;top:435.97px;font-size:7.2px;color:#222;transform:scaleX(0.7937)">Vias</span><span class="t" style="left:843.90px;top:445.40px;font-size:7.2px;color:#222;transform:scaleX(0.8100)">Graphics</span><span class="t" style="left:843.90px;top:454.83px;font-size:7.2px;color:#222;transform:scaleX(0.8188)">Rule Areas</span><span class="t" style="left:843.90px;top:464.26px;font-size:7.2px;color:#222;transform:scaleX(0.8478)">Other items</span><span class="t" style="left:6.60px;top:475.51px;font-size:7.2px;color:#444;transform:scaleX(0.8541)">Pads</span><span class="t" style="left:38.00px;top:475.51px;font-size:7.2px;color:#444;transform:scaleX(0.8947)">Vias</span><span class="t" style="left:68.00px;top:475.51px;font-size:7.2px;color:#444;transform:scaleX(0.8836)">Track Segments</span><span class="t" style="left:135.00px;top:475.51px;font-size:7.2px;color:#444;transform:scaleX(0.9066)">Nets</span><span class="t" style="left:168.00px;top:475.51px;font-size:7.2px;color:#444;transform:scaleX(0.9669)">Unrouted</span>
<svg width="900" height="478" viewBox="0 0 900 478">
<path d="M757.4,6.6 H762.6" stroke="#8a8a8a" stroke-width="0.7"/>
<rect x="811.6" y="4.6" width="4.2" height="4.2" rx="0.8" fill="none" stroke="#8a8a8a" stroke-width="0.7"/><path d="M813,4 H816.6 V7.6" stroke="#8a8a8a" stroke-width="0.6" fill="none"/>
<path d="M866.6,3.8 L871.8,9 M871.8,3.8 L866.6,9" stroke="#8a8a8a" stroke-width="0.7"/>
<rect x="1.2" y="1.4" width="9.6" height="9.6" rx="1.6" fill="#2f8a2a"/><path d="M3,4 H6 L8,6 M3,8 H6" stroke="#bfe6b8" stroke-width="0.8" fill="none"/>
<g transform="translate(11.2,35.2) scale(1)"><path d="M-6.3,-6 H4 L6.3,-3.7 V6 H-6.3 Z" fill="#3d3d3d"/><rect x="-3.6" y="-6" width="6" height="4" fill="#f0f0f0"/><rect x="0.2" y="-5.5" width="1.6" height="3" fill="#3d3d3d"/><rect x="-4.2" y="0.2" width="8.4" height="5.8" fill="#f0f0f0"/></g>
<g transform="translate(34.7,35.2) scale(1)"><rect x="-6.3" y="-6.2" width="12.6" height="12.4" rx="1.6" fill="#1d7d22"/><path d="M-4,-3 H0 L2,-5 M-4,3 H-1 M-3.5,-0.2 L-1,-0.2" stroke="#8fd48f" stroke-width="0.9" fill="none"/><circle cx="-3.6" cy="0.2" r="0.9" fill="#d8f0d8"/><circle cx="2.6" cy="2.8" r="3.3" fill="#d8303c"/><circle cx="2.6" cy="2.8" r="1.3" fill="#f4d0d0"/><path d="M2.6,-1.2 V6.8 M-1.4,2.8 H6.6 M-0.2,0 L5.4,5.6 M5.4,0 L-0.2,5.6" stroke="#d8303c" stroke-width="1.3"/><circle cx="2.6" cy="2.8" r="1.2" fill="#f0e0e0"/></g>
<g transform="translate(57.3,35.2) scale(1)"><path d="M-5.2,-4.5 V5 H2.5" fill="none" stroke="#3d3d3d" stroke-width="1"/><path d="M-3,-6.3 H2.6 L5.6,-3.2 V6.6 H-3 Z" fill="#f4f4f4" stroke="#3d3d3d" stroke-width="1"/><path d="M2.4,-6.3 V-3 H5.6" fill="none" stroke="#3d3d3d" stroke-width="0.8"/></g>
<g transform="translate(77.3,35.2) scale(1)"><rect x="-4" y="-6.5" width="8" height="4" fill="#3d3d3d"/><rect x="-3" y="-5.6" width="6" height="3" fill="#f0f0f0"/><rect x="-7" y="-3.2" width="14" height="7.2" rx="1.2" fill="#3d3d3d"/><rect x="-3.8" y="1" width="7.6" height="5.6" fill="#f4f4f4" stroke="#3d3d3d" stroke-width="0.9"/></g>
<g transform="translate(96.8,35.2) scale(1)"><rect x="-4.5" y="-6.6" width="9" height="3" fill="#9a9a9a"/><rect x="-7" y="-4" width="14" height="3.8" rx="0.8" fill="#3d3d3d"/><rect x="-3.6" y="-0.2" width="7.2" height="5" fill="#f4f4f4" stroke="#8a8a8a" stroke-width="0.8"/><path d="M-5.5,-0.2 V6.4 M5.5,-0.2 V6.4 M-6.6,6.4 H-4.2 M4.2,6.4 H6.6" stroke="#3d3d3d" stroke-width="1.1"/></g>
<g transform="translate(119.5,35.2) scale(1)"><path d="M-4.6,-1.8 A5,5 0 1 1 -1,5.4" fill="none" stroke="#3d3d3d" stroke-width="1.2"/><path d="M-5.2,-6 V-1.2 H-0.4" fill="none" stroke="#3d3d3d" stroke-width="1.2"/></g>
<g transform="translate(139.2,35.2) scale(1)"><path d="M4.6,-1.8 A5,5 0 1 0 1,5.4" fill="none" stroke="#b9b9b9" stroke-width="1.2"/><path d="M5.2,-6 V-1.2 H0.4" fill="none" stroke="#b9b9b9" stroke-width="1.2"/></g>
<g transform="translate(163,35.2) scale(1)"><circle cx="1.4" cy="-1.6" r="4.6" fill="none" stroke="#3d3d3d" stroke-width="1.1"/><path d="M-2,1.8 L-6.2,6" stroke="#3d3d3d" stroke-width="1.5"/><text x="1.4" y="0.8" font-size="6.4" font-weight="bold" text-anchor="middle" fill="#3d3d3d" font-family="Liberation Sans,sans-serif">A</text></g>
<g transform="translate(186,35.2) scale(1)"><path d="M-5.6,-0.6 A5.7,5.7 0 0 1 4.6,-3.6" fill="none" stroke="#3d3d3d" stroke-width="1.3"/><path d="M5.6,0.6 A5.7,5.7 0 0 1 -4.6,3.6" fill="none" stroke="#3d3d3d" stroke-width="1.3"/><path d="M1.6,-3.4 H5.4 V-7" fill="none" stroke="#3d3d3d" stroke-width="1.3"/><path d="M-1.6,3.4 H-5.4 V7" fill="none" stroke="#3d3d3d" stroke-width="1.3"/></g>
<g transform="translate(205.2,35.2) scale(1)"><circle cx="-1.3" cy="-1.6" r="4.7" fill="none" stroke="#3d3d3d" stroke-width="1.1"/><path d="M2.2,2 L6.2,6" stroke="#3d3d3d" stroke-width="1.5"/><path d="M-3.8,-1.6 H1.2 M-1.3,-4.1 V0.9" stroke="#3d3d3d" stroke-width="1.3"/></g>
<g transform="translate(224.3,35.2) scale(1)"><circle cx="-1.3" cy="-1.6" r="4.7" fill="none" stroke="#3d3d3d" stroke-width="1.1"/><path d="M2.2,2 L6.2,6" stroke="#3d3d3d" stroke-width="1.5"/><path d="M-3.8,-1.6 H1.2" stroke="#3d3d3d" stroke-width="1.3"/></g>
<g transform="translate(243.6,35.2) scale(1)"><circle cx="-1.3" cy="-1.6" r="4.7" fill="none" stroke="#3d3d3d" stroke-width="1.1"/><path d="M2.2,2 L6.2,6" stroke="#3d3d3d" stroke-width="1.5"/><rect x="-3.2" y="-3.9" width="3.8" height="4.6" fill="#bdbdbd" stroke="#777" stroke-width="0.6"/></g>
<g transform="translate(262.8,35.2) scale(1)"><circle cx="-1.3" cy="-1.6" r="4.7" fill="none" stroke="#3d3d3d" stroke-width="1.1"/><path d="M2.2,2 L6.2,6" stroke="#3d3d3d" stroke-width="1.5"/><path d="M-3.6,-0.2 L-2.4,-3 L-1.2,-0.2 M0.2,-2.4 H1.4" stroke="#777" stroke-width="0.7" fill="none"/></g>
<g transform="translate(282,35.2) scale(1)"><circle cx="-1.3" cy="-1.6" r="4.7" fill="none" stroke="#3d3d3d" stroke-width="1.1"/><path d="M2.2,2 L6.2,6" stroke="#3d3d3d" stroke-width="1.5"/><path d="M-2.8,-3.8 L-2.8,0.6 L-1.6,-0.4 L-0.4,1.2 L0.4,0.6 L-0.6,-0.8 L0.8,-1 Z" fill="#999" stroke="#777" stroke-width="0.4"/></g>
<g transform="translate(305.3,35.2) scale(1)"><path d="M-5.6,5.2 H5 V0.6 Z" fill="#6d6d6d"/><path d="M3.2,0.2 C3.2,-3.6 0.5,-4.4 -1.6,-4.4" fill="none" stroke="#1a81c2" stroke-width="1.5"/><path d="M-1.2,-7 L-4.2,-4.4 L-1.2,-1.8 Z" fill="#1a81c2"/></g>
<g transform="translate(325,35.2) scale(1)"><path d="M5.6,5.2 H-5 V0.6 Z" fill="#6d6d6d"/><path d="M-3.2,0.2 C-3.2,-3.6 -0.5,-4.4 1.6,-4.4" fill="none" stroke="#1a81c2" stroke-width="1.5"/><path d="M1.2,-7 L4.2,-4.4 L1.2,-1.8 Z" fill="#1a81c2"/></g>
<g transform="translate(344,35.2) scale(1)"><path d="M-5.4,-6.2 L5.8,-1.2 H-5.4 Z" fill="#6d6d6d"/><path d="M-5.4,0.2 H5.8 L-5.4,5.6 Z" fill="#1a81c2"/></g>
<g transform="translate(363.6,35.2) scale(1)"><path d="M-0.8,-6 V5.4 H-5.6 Z" fill="#8a8a8a"/><path d="M0.6,-6 V5.4 H5.6 Z" fill="#1a81c2"/></g>
<g transform="translate(383.4,35.2) scale(1)"><rect x="-5.6" y="-5.6" width="11.2" height="11.2" fill="none" stroke="#c6c6c6" stroke-width="0.9" stroke-dasharray="1.6 1.2"/><rect x="-2.6" y="-2.2" width="6" height="6" fill="#fafafa" stroke="#c0c0c0" stroke-width="0.9"/><rect x="-4.2" y="-4" width="4.6" height="4.6" fill="none" stroke="#c8c8c8" stroke-width="0.9"/></g>
<g transform="translate(402.6,35.2) scale(1)"><rect x="-2.6" y="-2.2" width="7" height="7" fill="#fafafa" stroke="#c0c0c0" stroke-width="0.9"/><path d="M-5.6,-4.2 H0.6 M-4,-6 V2 M-5.2,0.8 H-2.6 M-0.8,-5.6 V-2.2" stroke="#c4c4c4" stroke-width="0.9" fill="none"/></g>
<g transform="translate(421.3,35.2) scale(1)"><rect x="-5.2" y="-1.2" width="10.4" height="7.6" fill="#bcbcbc"/><path d="M-3,-1.2 V-3.2 A3,3 0 0 1 3,-3.2 V-1.2" fill="none" stroke="#bcbcbc" stroke-width="1.4"/><rect x="-0.6" y="1.4" width="1.2" height="2.6" fill="#f0f0f0"/></g>
<g transform="translate(440.6,35.2) scale(1)"><rect x="-6" y="-1.2" width="10.4" height="7.6" fill="#bcbcbc"/><path d="M0.4,-1.2 V-3.6 A2.8,2.8 0 0 1 6,-3.6 V-2.6" fill="none" stroke="#bcbcbc" stroke-width="1.4"/><rect x="-1.4" y="1.4" width="1.2" height="2.6" fill="#f0f0f0"/></g>
<g transform="translate(464.6,35.2) scale(1)"><path d="M-4,-4.6 H4.6 V2 M-4.6,-4.6 C-6.6,-4.6 -4.6,-0.8 -6.4,0 C-4.6,0.8 -6.4,4.6 -4.6,4.6" fill="none" stroke="#1a81c2" stroke-width="0.9"/><rect x="-4.4" y="-6.2" width="2.4" height="2.8" fill="#1a81c2"/><rect x="-1" y="-6.2" width="2.4" height="2.8" fill="#1a81c2"/><rect x="2.4" y="-6.2" width="2.4" height="2.8" fill="#1a81c2"/><circle cx="-3.6" cy="4.6" r="1.5" fill="#2aa0b4"/><circle cx="3" cy="2.8" r="3.9" fill="#c8283a"/><path d="M1,4.8 L5,0.8" stroke="#fbe9ea" stroke-width="1.8"/></g>
<g transform="translate(483.2,35.2) scale(1)"><rect x="-6.4" y="-5.4" width="3.2" height="11" fill="#4a4a4a"/><rect x="-2.6" y="-5.4" width="3.2" height="11" fill="#5a5a5a"/><path d="M1.2,-5 L3.8,-5.4 L6.6,5.4 L1.2,5.6 Z" fill="#c63a54"/><circle cx="2.6" cy="1.2" r="2.5" fill="#f6e6ea" stroke="#c83050" stroke-width="0.9"/><path d="M2,-5.6 H4.4" stroke="#1a81c2" stroke-width="1.4"/></g>
<rect x="493.3" y="26" width="18.4" height="17.6" fill="#cce4f7" stroke="#7ab4e6" stroke-width="0.8"/>
<g transform="translate(502.5,35.2) scale(1)"><path d="M-4.2,-5.8 H4.2 L5,2.8 H-5 Z" fill="#3a3a3a"/><rect x="-4.2" y="-5.8" width="8.4" height="2" fill="#2a2a2a"/><rect x="-6.6" y="3.8" width="13.2" height="1.8" fill="#1a81c2"/></g>
<g transform="translate(525,35.2) scale(1)"><rect x="-5.8" y="-6.2" width="6" height="12.4" rx="1" fill="#a8a08c"/><path d="M0.2,-4.8 L3.4,-6.4 L6,-4.6 V6 H0.2 Z" fill="#2f8a2e"/><path d="M-3.4,-6 V0 L-5.4,2 M-3.4,-2.4 L-0.6,-0.6" stroke="#3a2a2a" stroke-width="1" fill="none"/><circle cx="-2.6" cy="3.4" r="3.2" fill="#c9283a"/><path d="M-4.2,3.2 L-2.6,4.6 L-0.6,2" stroke="#fff" stroke-width="1" fill="none"/><circle cx="3.2" cy="-2.8" r="0.8" fill="#d9e84a"/></g>
<g transform="translate(544.6,35.2) scale(1)"><path d="M-5.6,-5 H-3.4 M-5.6,-1.8 H-3.4 M-5.6,1.4 H-3.4 M-5.6,4.2 H-3.4" stroke="#6a6a6a" stroke-width="1.2"/><path d="M-2,-5.4 H3.4" stroke="#9a9a9a" stroke-width="0.8"/><circle cx="2.4" cy="2" r="4.1" fill="#c8203a"/><path d="M0.2,2 L1.8,3.6 L4.6,0.4" stroke="#fff" stroke-width="1.3" fill="none"/></g>
<g transform="translate(568.8,35.2) scale(1)"><rect x="-6.8" y="-6.8" width="13.6" height="13.6" rx="2.6" fill="#e3d7c2"/><path d="M-0.4,-6.6 V1 L-3.6,4 H-6.2 M-0.4,1 L1.4,5.8 M-0.4,-2.2 L2.6,-2.2" stroke="#3a2a24" stroke-width="1.3" fill="none"/><path d="M0.6,-2.2 H6.6" stroke="#c8283a" stroke-width="1.8"/></g>
<g transform="translate(592.3,35.2) scale(1)"><rect x="-6.4" y="-6.2" width="12.8" height="12.2" rx="1" fill="#4a4a4a"/><rect x="-6.4" y="-6.2" width="12.8" height="2.4" rx="1" fill="#3a3a3a"/><path d="M-4,-1.4 L-1.6,0.6 L-4,2.6" stroke="#fff" stroke-width="1.1" fill="none"/><path d="M-0.4,3.4 H3.6" stroke="#fff" stroke-width="1.1"/><path d="M-4.6,-5 H-2.4" stroke="#ddd" stroke-width="0.7"/></g>
<g transform="translate(615.4,35.2) scale(1)"><rect x="-7.2" y="-7.2" width="14.4" height="14.4" fill="#0c3a22"/><circle cx="0" cy="0" r="5.9" fill="#d8d46a"/><path d="M-2.2,-5.4 V5.4 M2.2,-5.4 V5.4 M0,-5.8 V5.8 M-5.6,0 H-2.2 M2.2,0 H5.6" stroke="#1c5a30" stroke-width="1"/></g>
<rect x="22.200000000000003" y="27" width="0.8" height="16.5" fill="#cfcfcf"/>
<rect x="45.6" y="27" width="0.8" height="16.5" fill="#cfcfcf"/>
<rect x="107.6" y="27" width="0.8" height="16.5" fill="#cfcfcf"/>
<rect x="150.4" y="27" width="0.8" height="16.5" fill="#cfcfcf"/>
<rect x="173.6" y="27" width="0.8" height="16.5" fill="#cfcfcf"/>
<rect x="292.6" y="27" width="0.8" height="16.5" fill="#cfcfcf"/>
<rect x="452.20000000000005" y="27" width="0.8" height="16.5" fill="#cfcfcf"/>
<rect x="555.6" y="27" width="0.8" height="16.5" fill="#cfcfcf"/>
<rect x="580.0" y="27" width="0.8" height="16.5" fill="#cfcfcf"/>
<rect x="603.2" y="27" width="0.8" height="16.5" fill="#cfcfcf"/>
<path d="M97.2,49.4 V58 Q97.2,60.4 99.6,60.4 H106.4 Q108.8,60.4 108.8,58 V49.4" fill="none" stroke="#2c3e6a" stroke-width="1.3"/><path d="M100.2,53.4 H106 M100.2,55.6 H106" stroke="#555" stroke-width="0.7"/><path d="M101,60.6 H105.2 L103.1,62.6 Z" fill="#2a8fd0"/>
<rect x="113.8" y="48.6" width="0.8" height="15" fill="#cfcfcf"/>
<rect x="207.79999999999998" y="48.6" width="0.8" height="15" fill="#cfcfcf"/>
<rect x="410.40000000000003" y="48.6" width="0.8" height="15" fill="#cfcfcf"/>
<rect x="288.8" y="48.8" width="14.2" height="13.4" fill="#4a88c8"/><path d="M288.8,48.8 H299.6 L292.6,62.2 H288.8 Z" fill="#d8332e"/><path d="M299.8,48.8 L292.8,62.2" stroke="#e8c8d8" stroke-width="0.7"/>
<rect x="214.6" y="53.4" width="5.8" height="5.6" fill="#c62f35" stroke="#7a2020" stroke-width="0.5"/>
<path d="M84.6,54.6 l2.5,2.5 l2.5,-2.5" stroke="#666" fill="none" stroke-width="0.8"/><path d="M197,54.6 l2.5,2.5 l2.5,-2.5" stroke="#666" fill="none" stroke-width="0.8"/><path d="M278,54.6 l2.5,2.5 l2.5,-2.5" stroke="#666" fill="none" stroke-width="0.8"/><path d="M399.6,54.6 l2.5,2.5 l2.5,-2.5" stroke="#666" fill="none" stroke-width="0.8"/><path d="M461.4,54.6 l2.5,2.5 l2.5,-2.5" stroke="#666" fill="none" stroke-width="0.8"/>
<rect x="1.2" y="69.2" width="17.6" height="17.39999999999999" fill="#cce4f7" stroke="#84b8e6" stroke-width="0.7"/>
<g transform="translate(10,78) scale(1)"><rect x="-5.7" y="-5.7" width="1.5" height="1.5" fill="#3b4a66"/><rect x="-5.7" y="-2.3000000000000003" width="1.5" height="1.5" fill="#3b4a66"/><rect x="-5.7" y="1.0999999999999996" width="1.5" height="1.5" fill="#3b4a66"/><rect x="-5.7" y="4.499999999999999" width="1.5" height="1.5" fill="#3b4a66"/><rect x="-2.3000000000000003" y="-5.7" width="1.5" height="1.5" fill="#3b4a66"/><rect x="-2.3000000000000003" y="-2.3000000000000003" width="1.5" height="1.5" fill="#3b4a66"/><rect x="-2.3000000000000003" y="1.0999999999999996" width="1.5" height="1.5" fill="#3b4a66"/><rect x="-2.3000000000000003" y="4.499999999999999" width="1.5" height="1.5" fill="#3b4a66"/><rect x="1.0999999999999996" y="-5.7" width="1.5" height="1.5" fill="#3b4a66"/><rect x="1.0999999999999996" y="-2.3000000000000003" width="1.5" height="1.5" fill="#3b4a66"/><rect x="1.0999999999999996" y="1.0999999999999996" width="1.5" height="1.5" fill="#3b4a66"/><rect x="1.0999999999999996" y="4.499999999999999" width="1.5" height="1.5" fill="#3b4a66"/><rect x="4.499999999999999" y="-5.7" width="1.5" height="1.5" fill="#3b4a66"/><rect x="4.499999999999999" y="-2.3000000000000003" width="1.5" height="1.5" fill="#3b4a66"/><rect x="4.499999999999999" y="1.0999999999999996" width="1.5" height="1.5" fill="#3b4a66"/><rect x="4.499999999999999" y="4.499999999999999" width="1.5" height="1.5" fill="#3b4a66"/></g>
<rect x="1.2" y="88" width="17.6" height="17.400000000000006" fill="#cce4f7" stroke="#84b8e6" stroke-width="0.7"/>
<g transform="translate(10,96.8) scale(1)"><rect x="-5.7" y="-5.7" width="1.5" height="1.5" fill="#3b4a66"/><rect x="-5.7" y="-2.3000000000000003" width="1.5" height="1.5" fill="#3b4a66"/><rect x="-5.7" y="1.0999999999999996" width="1.5" height="1.5" fill="#3b4a66"/><rect x="-5.7" y="4.499999999999999" width="1.5" height="1.5" fill="#8aa0b8"/><rect x="-2.3000000000000003" y="-5.7" width="1.5" height="1.5" fill="#3b4a66"/><rect x="-2.3000000000000003" y="-2.3000000000000003" width="1.5" height="1.5" fill="#3b4a66"/><rect x="-2.3000000000000003" y="1.0999999999999996" width="1.5" height="1.5" fill="#8aa0b8"/><rect x="-2.3000000000000003" y="4.499999999999999" width="1.5" height="1.5" fill="#8aa0b8"/><rect x="1.0999999999999996" y="-5.7" width="1.5" height="1.5" fill="#3b4a66"/><rect x="1.0999999999999996" y="-2.3000000000000003" width="1.5" height="1.5" fill="#8aa0b8"/><rect x="1.0999999999999996" y="1.0999999999999996" width="1.5" height="1.5" fill="#8aa0b8"/><rect x="1.0999999999999996" y="4.499999999999999" width="1.5" height="1.5" fill="#8aa0b8"/><rect x="4.499999999999999" y="-5.7" width="1.5" height="1.5" fill="#8aa0b8"/><rect x="4.499999999999999" y="-2.3000000000000003" width="1.5" height="1.5" fill="#8aa0b8"/><rect x="4.499999999999999" y="1.0999999999999996" width="1.5" height="1.5" fill="#8aa0b8"/><rect x="4.499999999999999" y="4.499999999999999" width="1.5" height="1.5" fill="#8aa0b8"/><path d="M-6.4,6.6 L6.6,-6.6" stroke="#333" stroke-width="0.9"/></g>
<g transform="translate(10,116) scale(1)"><path d="M-6.4,-5.8 V5.8 H6 M-6.4,5.8 L4,-4.6" stroke="#3d3d3d" stroke-width="1" fill="none"/><path d="M-7.6,-4.2 L-6.4,-6.4 L-5.2,-4.2" stroke="#3d3d3d" stroke-width="0.8" fill="none"/><circle cx="4.8" cy="-5.4" r="1.1" fill="#d02838"/><text x="2.8" y="3.8" font-size="5.4" font-style="italic" fill="#3d3d3d" font-family="Liberation Serif,serif">θ</text><text x="-3.6" y="-1.6" font-size="4.6" fill="#3d3d3d" font-family="Liberation Sans,sans-serif">r</text></g>
<g transform="translate(10,134.6) scale(1)"><text x="0" y="1" font-size="7.6" text-anchor="middle" fill="#3d3d3d" font-family="Liberation Sans,sans-serif">in</text><path d="M-5.4,3.9 H5.4" stroke="#3d3d3d" stroke-width="1"/><path d="M-6,3.9 L-4.4,3 V4.8 Z M6,3.9 L4.4,3 V4.8 Z" fill="#3d3d3d"/></g>
<g transform="translate(10,153.6) scale(1)"><text x="0" y="1.6" font-size="7.6" text-anchor="middle" fill="#3d3d3d" font-family="Liberation Sans,sans-serif">mil</text><path d="M-5.4,4.4 H5.4" stroke="#3d3d3d" stroke-width="1"/><path d="M-6,4.4 L-4.4,3.5 V5.3 Z M6,4.4 L4.4,3.5 V5.3 Z" fill="#3d3d3d"/></g>
<rect x="1.2" y="165.4" width="17.6" height="17.0" fill="#cce4f7" stroke="#84b8e6" stroke-width="0.7"/>
<g transform="translate(10,173.6) scale(1)"><text x="0" y="1.6" font-size="7.6" text-anchor="middle" fill="#2c3a55" font-family="Liberation Sans,sans-serif">mm</text><path d="M-5.4,4.2 H5.4" stroke="#2c3a55" stroke-width="1"/><path d="M-6.2,4.2 L-4.4,3.3 V5.1 Z M6.2,4.2 L4.4,3.3 V5.1 Z" fill="#2c3a55"/></g>
<g transform="translate(10,195) scale(1)"><path d="M0.4,-7 L1.2,-1.8 L5.6,-1 L1.2,-0.2 L0.4,3.6 L-0.4,-0.2 L-4.2,-1 L-0.4,-1.8 Z" fill="#2d7fc0"/><path d="M0.8,0 L3.6,4.4 L2.4,4.4 L3,6.2 L2,6.4 L1.4,4.8 L0.6,5.4 Z" fill="#3a4a60"/></g>
<rect x="2" y="204.2" width="16" height="0.8" fill="#cfcfcf"/>
<g transform="translate(10,217) scale(1)"><path d="M-4.6,-6.4 V6 M-6.6,4.2 H6 M-4.6,4.2 L4.4,-4" stroke="#3d3d3d" stroke-width="1.1" fill="none"/><circle cx="-2.6" cy="2.2" r="1.3" fill="none" stroke="#3d3d3d" stroke-width="0.7"/></g>
<rect x="2" y="227.8" width="16" height="0.8" fill="#e0b8b8"/>
<rect x="1.2" y="231" width="17.6" height="18" fill="#cce4f7" stroke="#84b8e6" stroke-width="0.7"/>
<g transform="translate(10,240) scale(1)"><path d="M-4.6,-3.8 L4,3.4 M-4.4,3.8 L3.6,-2.6 M3.6,-2.6 H6.4" stroke="#4a5468" stroke-width="0.9" fill="none"/><circle cx="-4.6" cy="-3.8" r="1.3" fill="#eaf2fb" stroke="#4a5468" stroke-width="0.7"/><circle cx="3.4" cy="-2.6" r="1.3" fill="#eaf2fb" stroke="#4a5468" stroke-width="0.7"/><circle cx="-4.2" cy="4" r="1.3" fill="#eaf2fb" stroke="#4a5468" stroke-width="0.7"/><circle cx="3.8" cy="3.4" r="1.3" fill="#eaf2fb" stroke="#4a5468" stroke-width="0.7"/></g>
<g transform="translate(10,259.4) scale(1)"><path d="M-6.4,7 L6.6,-7" stroke="#555" stroke-width="0.9"/><path d="M-5,1.6 L0.2,-4" stroke="#666" stroke-width="0.8"/><circle cx="-5.4" cy="2" r="1.2" fill="#fff" stroke="#555" stroke-width="0.7"/><circle cx="0.4" cy="-4.4" r="1.2" fill="#fff" stroke="#555" stroke-width="0.7"/><path d="M-1.6,6 Q4.6,5 5.2,-0.6" stroke="#666" stroke-width="0.8" fill="none"/><circle cx="-2" cy="6" r="1.2" fill="#fff" stroke="#555" stroke-width="0.7"/><circle cx="5.2" cy="-1" r="1.2" fill="#fff" stroke="#555" stroke-width="0.7"/></g>
<rect x="2" y="270.6" width="16" height="0.8" fill="#cfcfcf"/>
<g transform="translate(10,282.6) scale(1)"><path d="M-6.8,-5 C-3,-4.6 -2,-1 1,-0.6 C4,-0.2 4,2.6 6.6,3.8" stroke="#c8283a" stroke-width="1" fill="none"/><path d="M-3,-6 C0,-5.2 1,-3 3.4,-2.4 C5,-2 5,-0.6 6.6,0" stroke="#c8283a" stroke-width="1" fill="none"/><path d="M-6.8,2.2 C-4,4 -1,3.6 1,3.8 C3,4 3.4,6 4.6,6.8" stroke="#3a3f5c" stroke-width="1" fill="none"/><circle cx="-1.8" cy="0.8" r="1.9" fill="#f5b928" stroke="#e08a20" stroke-width="0.6"/></g>
<g transform="translate(10,302.4) scale(1)"><path d="M-6.4,-4.4 H-2.4 Q0.4,-4.4 0.4,-1.6 V6.4 M-6.4,-2 H-4.4 Q-2.8,-2 -2.8,-0.4 V6.4" stroke="#ecd9b0" stroke-width="1.1" fill="none"/><path d="M2,-7 Q3.2,-3 6.4,-1.8 M3.6,-1.6 V6.4 M6,-3.6 Q3.6,-2.4 1.4,-2.4" stroke="#b8cde6" stroke-width="1" fill="none"/></g>
<rect x="2" y="313" width="16" height="0.8" fill="#e6cccc"/>
<rect x="1.2" y="317" width="17.6" height="17.600000000000023" fill="#cce4f7" stroke="#84b8e6" stroke-width="0.7"/>
<g transform="translate(10,326) scale(1)"><path d="M-2.6,-6 H6 V-2.4 H2.6 V0 H6 V6 H-6 V-1.4 H-2.6 Z" fill="#2e9ad8"/><path d="M2,-1.8 H5.6 V-0.6 H2 Z" fill="#1c2c44"/></g>
<g transform="translate(10,345) scale(1)"><path d="M-2.6,-5.6 H5.6 V5.6 H-5.6 V0 " fill="none" stroke="#444" stroke-width="0.9" stroke-dasharray="1.2 1.2"/><path d="M-6.4,0.4 H-2.6 V-1" stroke="#444" stroke-width="0.9" fill="none"/><path d="M2,-0.8 H5.6 V0.6 H2 Z" fill="#222"/></g>
<rect x="2" y="356" width="16" height="0.8" fill="#cfcfcf"/>
<g transform="translate(10,368) scale(1)"><path d="M-5,-5.4 C-7.4,-5.4 -4.6,-0.8 -6.6,0 C-4.6,0.8 -7.4,5.4 -5,5.4 M5.6,-4 V4" fill="none" stroke="#3a5a7a" stroke-width="0.8"/><circle cx="-3.6" cy="-5" r="1.4" fill="#1a81c2"/><circle cx="0" cy="-5" r="1.4" fill="#1a81c2"/><circle cx="3.6" cy="-5" r="1.4" fill="#1a81c2"/><circle cx="-3.6" cy="5" r="1.3" fill="none" stroke="#1a81c2" stroke-width="0.8"/><circle cx="0" cy="5" r="1.3" fill="none" stroke="#1a81c2" stroke-width="0.8"/><circle cx="3.6" cy="5" r="1.3" fill="none" stroke="#1a81c2" stroke-width="0.8"/><path d="M-6,6.4 L6.4,-6.4" stroke="#333" stroke-width="0.8"/></g>
<g transform="translate(10,387.6) scale(1)"><path d="M-6,5 A6,6 0 0 1 4.6,-5.4 Z" fill="#f0962a"/><circle cx="0.6" cy="0.4" r="5.4" fill="none" stroke="#e9c9a0" stroke-width="0.8"/><circle cx="1.4" cy="1" r="2" fill="#fff" stroke="#d9c0a0" stroke-width="0.5"/><path d="M-7,7.4 L6.6,-6.6" stroke="#4a4a5a" stroke-width="0.9"/></g>
<g transform="translate(10,407.4) scale(1)"><rect x="-1.6" y="-7" width="3" height="6" rx="1.4" fill="#c8283a"/><path d="M-1,-0.6 V6.4 M1,-0.6 V6.4" stroke="#d85a6a" stroke-width="0.7"/><rect x="-7" y="-0.9" width="7" height="2" fill="#1f74b4"/><rect x="0" y="-0.9" width="6.8" height="2" fill="#a8d0ee"/><path d="M-7,7.4 L6.6,-6.8" stroke="#3a3a4a" stroke-width="0.9"/></g>
<rect x="2" y="418.4" width="16" height="0.8" fill="#cfcfcf"/>
<rect x="1.2" y="422" width="17.6" height="17.399999999999977" fill="#cce4f7" stroke="#84b8e6" stroke-width="0.7"/>
<g transform="translate(10,431) scale(1)"><path d="M0,-0.6 L6,3.2 L0,7 L-6,3.2 Z" fill="#f0a93a"/><path d="M0,-6.6 L5.8,-2.6 V0.6 L0,4.6 L-5.8,0.6 V-2.6 Z" fill="#1f7ec6"/></g>
<g transform="translate(10,449.6) scale(1)"><path d="M-5.4,-5 L5,5.4" stroke="#2f7cb8" stroke-width="2.6" stroke-linecap="round"/><circle cx="-5" cy="-5.2" r="2.2" fill="#2f7cb8"/><path d="M-6.6,-7.4 L-4.2,-4.8" stroke="#f0f0f0" stroke-width="1.6"/><circle cx="5" cy="5.2" r="0.7" fill="#f0f0f0"/><path d="M5.8,-5.8 L2.4,-2.6" stroke="#2a2a2a" stroke-width="2.6" stroke-linecap="round"/><path d="M2,-2 L-6,6" stroke="#8a3030" stroke-width="1.1"/></g>
<rect x="761.4" y="69.4" width="18.2" height="16.8" fill="#cce4f7" stroke="#84b8e6" stroke-width="0.7"/>
<g transform="translate(770.4,77.8) scale(1)"><path d="M-2.6,-4.6 L-2.6,3.6 L-0.6,1.8 L0.8,4.4 L2.2,3.6 L1,1.2 L3.6,0.8 Z" fill="#444"/></g>
<g transform="translate(770.4,97.2) scale(1)"><path d="M-6.4,-6.6 L6,6 M6.4,-6 L-6,6.4" stroke="#555" stroke-width="0.8"/><circle cx="0" cy="0" r="1.3" fill="#f0f0f0" stroke="#555" stroke-width="0.6"/></g>
<rect x="762" y="108" width="16.4" height="0.8" fill="#cfcfcf"/>
<g transform="translate(770.4,120.8) scale(1)"><path d="M-5,-5 C-7.4,-5 -4.8,-0.8 -6.8,0 C-4.8,0.8 -7.4,5 -5,5 M6.4,-4 V4" fill="none" stroke="#3a5a7a" stroke-width="0.8"/><circle cx="-3.8" cy="-5" r="1.5" fill="#1a81c2"/><circle cx="-3.8" cy="5" r="1.5" fill="#1a81c2"/><circle cx="0" cy="-5" r="1.5" fill="#1a81c2"/><circle cx="0" cy="5" r="1.5" fill="#1a81c2"/><circle cx="3.8" cy="-5" r="1.5" fill="#1a81c2"/><circle cx="3.8" cy="5" r="1.5" fill="#1a81c2"/><path d="M-2.4,0 H2.4" stroke="#f3d9b8" stroke-width="1.6"/></g>
<g transform="translate(770.4,140.4) scale(1)"><path d="M-6.6,7 L-3.2,0.2 H2.4 L5.6,-6.8" stroke="#2d6da8" stroke-width="1" fill="none"/><path d="M8.4,5 V8.2 H5.2 Z" fill="#111"/></g>
<g transform="translate(770.4,159) scale(1)"><path d="M-6.4,1.4 L-4.6,3 V-1.6 Q-3.6,-4.4 -2.6,-1.6 V1.6 Q-1.6,4 -0.6,1.6 V-1.8 Q0.4,-4.6 1.4,-1.8 V1.6 Q2.4,4 3.4,1.6 L4.6,-0.6 L6.4,0.8" stroke="#2d7fc0" stroke-width="1.1" fill="none"/><path d="M8.4,5.4 V8.6 H5.2 Z" fill="#111"/></g>
<g transform="translate(770.4,178.4) scale(1)"><rect x="-3.6" y="-3.6" width="7.2" height="7.2" rx="2.4" fill="#fff8e0" stroke="#e2a81e" stroke-width="2.2"/></g>
<g transform="translate(770.4,197.4) scale(1)"><path d="M-2.2,-5.2 H5.4 V-1.8 H3 A1.8,1.8 0 0 0 3,1.8 H5.4 V5.2 H-5.4 V0 H-2.2 Z" fill="#1f7ec6"/><path d="M3,-0.6 H5.4 V0.6 H3 Z" fill="#223"/></g>
<g transform="translate(770.4,216.8) scale(1)"><defs><pattern id="hz" width="2.4" height="2.4" patternUnits="userSpaceOnUse" patternTransform="rotate(-45)"><rect width="1.2" height="2.4" fill="#444"/></pattern></defs><path d="M-2,-5.4 H5.4 V5.6 H-5.4 V0.4 H-2 Z" fill="url(#hz)"/></g>
<rect x="762" y="228" width="16.4" height="0.8" fill="#cfcfcf"/>
<g transform="translate(770.4,240.6) scale(1)"><path d="M-5.2,5.2 L5.4,-5.4" stroke="#444" stroke-width="1.1"/></g>
<g transform="translate(770.4,259.6) scale(1)"><path d="M-5.4,5.6 Q-4.4,-4.4 5.4,-5.4" stroke="#444" stroke-width="1.1" fill="none"/></g>
<g transform="translate(770.4,278.8) scale(1)"><rect x="-5.2" y="-4.6" width="10.4" height="9" fill="#c4c4c4" stroke="#444" stroke-width="0.9"/></g>
<g transform="translate(770.4,297.8) scale(1)"><circle cx="0" cy="0" r="5.3" fill="#c4c4c4" stroke="#444" stroke-width="0.9"/></g>
<g transform="translate(770.4,317.4) scale(1)"><path d="M-5.2,-5.2 L5.4,-3.4 L2.6,5.4 L-5,4.6 L-1.6,-0.4 Z" fill="#bdbdbd" stroke="#444" stroke-width="1.1"/></g>
<g transform="translate(770.4,336.2) scale(1)"><path d="M-5.6,0.6 C-4,-2 -3,2 -1.4,0.6 C0.2,-0.8 0.4,-3 0.8,-1 C1.2,1.4 2,1.4 2.6,0 C3.4,-2.4 3.8,-5 3.6,0.4 L5.6,-0.4 M-2.4,-1 L-2.8,4.6" stroke="#2d5f9c" stroke-width="0.8" fill="none"/></g>
<g transform="translate(770.4,355.8) scale(1)"><rect x="-6" y="-5.8" width="12" height="11.6" rx="1.6" fill="#3d3d3d"/><path d="M-4.8,4 L-1.4,-0.8 L0.8,1.8 L2.4,0.2 L4.8,4 Z" fill="#f4f4f4"/><circle cx="2.4" cy="-2.8" r="1.4" fill="#f4f4f4"/></g>
<g transform="translate(770.4,375.2) scale(1)"><path d="M-5.2,-5.8 H5.2 V-3.4 H1.3 V6 H-1.3 V-3.4 H-5.2 Z" fill="#3d3d3d"/></g>
<g transform="translate(770.4,393) scale(1)"><rect x="-5.4" y="-4.6" width="10.8" height="9.4" fill="#d0d0d0" stroke="#444" stroke-width="1"/><path d="M-3.6,-2.4 H3.6 M-3.6,-0.4 H3.6 M-3.6,1.6 H1.6" stroke="#666" stroke-width="0.7"/></g>
<g transform="translate(770.4,412.6) scale(1)"><rect x="-6.6" y="-6.4" width="13.4" height="13" fill="#f6f6f6" stroke="#8a8a8a" stroke-width="0.9"/><path d="M-6.6,-2.6 H6.8 M-6.6,1.8 H6.8 M-2.2,-6.4 V6.6 M2.4,-6.4 V6.6" stroke="#9a9a9a" stroke-width="0.8"/><rect x="-6.6" y="-6.4" width="13.4" height="3.4" fill="#b8b8b8" opacity="0.6"/></g>
<g transform="translate(770.4,433.4) scale(1)"><path d="M-4.6,-5.2 H5.6 V4.2 H0.4" stroke="#555" stroke-width="0.9" fill="none"/><circle cx="-5.2" cy="-5.2" r="1.5" fill="#1a81c2"/><circle cx="0" cy="4.6" r="1.5" fill="#1a81c2"/><path d="M8.2,6 V9 H5.2 Z" fill="#111"/></g>
<g transform="translate(770.4,454) scale(1)"><path d="M-5.2,-7 L-4.6,1.6 L-2.8,-0.2 L-1.2,2.8 L0,2.2 L-1.4,-0.8 L1,-1.2 Z" fill="#444"/><circle cx="2.6" cy="2.4" r="3.8" fill="#cc2036"/><path d="M1,0.8 L4.2,4 M4.2,0.8 L1,4" stroke="#fff" stroke-width="1.1"/></g>
<rect x="762" y="463.6" width="16.4" height="0.8" fill="#cfcfcf"/>
<path d="M787.8,96.7 L790.8,99.5 L787.8,102.3 Z" fill="#2a3fd0"/>
<rect x="794" y="95.90" width="7.4" height="7" fill="#c83434"/>
<g transform="translate(807.9,99.5)"><ellipse cx="0" cy="0" rx="3.6" ry="3" fill="#e8e8e8" stroke="#3c3c3c" stroke-width="1.2"/><path d="M-3.4,-0.4 Q0,-3.4 3.4,-0.4" stroke="#3c3c3c" stroke-width="1.3" fill="none"/><circle cx="0" cy="0.3" r="1.3" fill="#8a8a8a"/></g>
<rect x="794" y="105.31" width="7.4" height="7" fill="#4d7fc4"/>
<g transform="translate(807.9,108.91)"><ellipse cx="0" cy="0" rx="3.6" ry="3" fill="#e8e8e8" stroke="#3c3c3c" stroke-width="1.2"/><path d="M-3.4,-0.4 Q0,-3.4 3.4,-0.4" stroke="#3c3c3c" stroke-width="1.3" fill="none"/><circle cx="0" cy="0.3" r="1.3" fill="#8a8a8a"/></g>
<rect x="794" y="114.73" width="7.4" height="7" fill="#840084"/>
<g transform="translate(807.9,118.33)"><ellipse cx="0" cy="0" rx="3.6" ry="3" fill="#e8e8e8" stroke="#3c3c3c" stroke-width="1.2"/><path d="M-3.4,-0.4 Q0,-3.4 3.4,-0.4" stroke="#3c3c3c" stroke-width="1.3" fill="none"/><circle cx="0" cy="0.3" r="1.3" fill="#8a8a8a"/></g>
<rect x="794" y="124.14" width="7.4" height="7" fill="#00007f"/>
<g transform="translate(807.9,127.74)"><ellipse cx="0" cy="0" rx="3.6" ry="3" fill="#e8e8e8" stroke="#3c3c3c" stroke-width="1.2"/><path d="M-3.4,-0.4 Q0,-3.4 3.4,-0.4" stroke="#3c3c3c" stroke-width="1.3" fill="none"/><circle cx="0" cy="0.3" r="1.3" fill="#8a8a8a"/></g>
<rect x="794" y="133.55" width="7.4" height="7" fill="#b4a09a"/>
<g transform="translate(807.9,137.15)"><ellipse cx="0" cy="0" rx="3.6" ry="3" fill="#e8e8e8" stroke="#3c3c3c" stroke-width="1.2"/><path d="M-3.4,-0.4 Q0,-3.4 3.4,-0.4" stroke="#3c3c3c" stroke-width="1.3" fill="none"/><circle cx="0" cy="0.3" r="1.3" fill="#8a8a8a"/></g>
<rect x="794" y="142.97" width="7.4" height="7" fill="#00b4aa"/>
<g transform="translate(807.9,146.56)"><ellipse cx="0" cy="0" rx="3.6" ry="3" fill="#e8e8e8" stroke="#3c3c3c" stroke-width="1.2"/><path d="M-3.4,-0.4 Q0,-3.4 3.4,-0.4" stroke="#3c3c3c" stroke-width="1.3" fill="none"/><circle cx="0" cy="0.3" r="1.3" fill="#8a8a8a"/></g>
<rect x="794" y="152.38" width="7.4" height="7" fill="#f2eda1"/>
<g transform="translate(807.9,155.98)"><ellipse cx="0" cy="0" rx="3.6" ry="3" fill="#e8e8e8" stroke="#3c3c3c" stroke-width="1.2"/><path d="M-3.4,-0.4 Q0,-3.4 3.4,-0.4" stroke="#3c3c3c" stroke-width="1.3" fill="none"/><circle cx="0" cy="0.3" r="1.3" fill="#8a8a8a"/></g>
<rect x="794" y="161.79" width="7.4" height="7" fill="#e8b2a7"/>
<g transform="translate(807.9,165.39)"><ellipse cx="0" cy="0" rx="3.6" ry="3" fill="#e8e8e8" stroke="#3c3c3c" stroke-width="1.2"/><path d="M-3.4,-0.4 Q0,-3.4 3.4,-0.4" stroke="#3c3c3c" stroke-width="1.3" fill="none"/><circle cx="0" cy="0.3" r="1.3" fill="#8a8a8a"/></g>
<rect x="794" y="171.20" width="7.4" height="7" fill="#5b2a80"/>
<g transform="translate(807.9,174.8)"><ellipse cx="0" cy="0" rx="3.6" ry="3" fill="#e8e8e8" stroke="#3c3c3c" stroke-width="1.2"/><path d="M-3.4,-0.4 Q0,-3.4 3.4,-0.4" stroke="#3c3c3c" stroke-width="1.3" fill="none"/><circle cx="0" cy="0.3" r="1.3" fill="#8a8a8a"/></g>
<rect x="794" y="180.62" width="7.4" height="7" fill="#0a6b62"/>
<g transform="translate(807.9,184.22)"><ellipse cx="0" cy="0" rx="3.6" ry="3" fill="#e8e8e8" stroke="#3c3c3c" stroke-width="1.2"/><path d="M-3.4,-0.4 Q0,-3.4 3.4,-0.4" stroke="#3c3c3c" stroke-width="1.3" fill="none"/><circle cx="0" cy="0.3" r="1.3" fill="#8a8a8a"/></g>
<rect x="794" y="190.03" width="7.4" height="7" fill="#c2c2c2"/>
<g transform="translate(807.9,193.63)"><ellipse cx="0" cy="0" rx="3.6" ry="3" fill="#e8e8e8" stroke="#3c3c3c" stroke-width="1.2"/><path d="M-3.4,-0.4 Q0,-3.4 3.4,-0.4" stroke="#3c3c3c" stroke-width="1.3" fill="none"/><circle cx="0" cy="0.3" r="1.3" fill="#8a8a8a"/></g>
<rect x="794" y="199.44" width="7.4" height="7" fill="#5994dc"/>
<g transform="translate(807.9,203.04)"><ellipse cx="0" cy="0" rx="3.6" ry="3" fill="#e8e8e8" stroke="#3c3c3c" stroke-width="1.2"/><path d="M-3.4,-0.4 Q0,-3.4 3.4,-0.4" stroke="#3c3c3c" stroke-width="1.3" fill="none"/><circle cx="0" cy="0.3" r="1.3" fill="#8a8a8a"/></g>
<rect x="794" y="208.86" width="7.4" height="7" fill="#b4dbd2"/>
<g transform="translate(807.9,212.46)"><ellipse cx="0" cy="0" rx="3.6" ry="3" fill="#e8e8e8" stroke="#3c3c3c" stroke-width="1.2"/><path d="M-3.4,-0.4 Q0,-3.4 3.4,-0.4" stroke="#3c3c3c" stroke-width="1.3" fill="none"/><circle cx="0" cy="0.3" r="1.3" fill="#8a8a8a"/></g>
<rect x="794" y="218.27" width="7.4" height="7" fill="#d8c852"/>
<g transform="translate(807.9,221.87)"><ellipse cx="0" cy="0" rx="3.6" ry="3" fill="#e8e8e8" stroke="#3c3c3c" stroke-width="1.2"/><path d="M-3.4,-0.4 Q0,-3.4 3.4,-0.4" stroke="#3c3c3c" stroke-width="1.3" fill="none"/><circle cx="0" cy="0.3" r="1.3" fill="#8a8a8a"/></g>
<rect x="794" y="227.68" width="7.4" height="7" fill="#d0d2cd"/>
<g transform="translate(807.9,231.28)"><ellipse cx="0" cy="0" rx="3.6" ry="3" fill="#e8e8e8" stroke="#3c3c3c" stroke-width="1.2"/><path d="M-3.4,-0.4 Q0,-3.4 3.4,-0.4" stroke="#3c3c3c" stroke-width="1.3" fill="none"/><circle cx="0" cy="0.3" r="1.3" fill="#8a8a8a"/></g>
<rect x="794" y="237.09" width="7.4" height="7" fill="#ff26e2"/>
<g transform="translate(807.9,240.69)"><ellipse cx="0" cy="0" rx="3.6" ry="3" fill="#e8e8e8" stroke="#3c3c3c" stroke-width="1.2"/><path d="M-3.4,-0.4 Q0,-3.4 3.4,-0.4" stroke="#3c3c3c" stroke-width="1.3" fill="none"/><circle cx="0" cy="0.3" r="1.3" fill="#8a8a8a"/></g>
<rect x="794" y="246.51" width="7.4" height="7" fill="#ff26e2"/>
<g transform="translate(807.9,250.11)"><ellipse cx="0" cy="0" rx="3.6" ry="3" fill="#e8e8e8" stroke="#3c3c3c" stroke-width="1.2"/><path d="M-3.4,-0.4 Q0,-3.4 3.4,-0.4" stroke="#3c3c3c" stroke-width="1.3" fill="none"/><circle cx="0" cy="0.3" r="1.3" fill="#8a8a8a"/></g>
<rect x="794" y="255.92" width="7.4" height="7" fill="#26e9ff"/>
<g transform="translate(807.9,259.52)"><ellipse cx="0" cy="0" rx="3.6" ry="3" fill="#e8e8e8" stroke="#3c3c3c" stroke-width="1.2"/><path d="M-3.4,-0.4 Q0,-3.4 3.4,-0.4" stroke="#3c3c3c" stroke-width="1.3" fill="none"/><circle cx="0" cy="0.3" r="1.3" fill="#8a8a8a"/></g>
<rect x="794" y="265.33" width="7.4" height="7" fill="#afafaf"/>
<g transform="translate(807.9,268.93)"><ellipse cx="0" cy="0" rx="3.6" ry="3" fill="#e8e8e8" stroke="#3c3c3c" stroke-width="1.2"/><path d="M-3.4,-0.4 Q0,-3.4 3.4,-0.4" stroke="#3c3c3c" stroke-width="1.3" fill="none"/><circle cx="0" cy="0.3" r="1.3" fill="#8a8a8a"/></g>
<rect x="794" y="274.75" width="7.4" height="7" fill="#585d84"/>
<g transform="translate(807.9,278.35)"><ellipse cx="0" cy="0" rx="3.6" ry="3" fill="#e8e8e8" stroke="#3c3c3c" stroke-width="1.2"/><path d="M-3.4,-0.4 Q0,-3.4 3.4,-0.4" stroke="#3c3c3c" stroke-width="1.3" fill="none"/><circle cx="0" cy="0.3" r="1.3" fill="#8a8a8a"/></g>
<rect x="794" y="284.16" width="7.4" height="7" fill="#c2c2c2"/>
<g transform="translate(807.9,287.76)"><ellipse cx="0" cy="0" rx="3.6" ry="3" fill="#e8e8e8" stroke="#3c3c3c" stroke-width="1.2"/><path d="M-3.4,-0.4 Q0,-3.4 3.4,-0.4" stroke="#3c3c3c" stroke-width="1.3" fill="none"/><circle cx="0" cy="0.3" r="1.3" fill="#8a8a8a"/></g>
<rect x="794" y="293.57" width="7.4" height="7" fill="#5994dc"/>
<g transform="translate(807.9,297.17)"><ellipse cx="0" cy="0" rx="3.6" ry="3" fill="#e8e8e8" stroke="#3c3c3c" stroke-width="1.2"/><path d="M-3.4,-0.4 Q0,-3.4 3.4,-0.4" stroke="#3c3c3c" stroke-width="1.3" fill="none"/><circle cx="0" cy="0.3" r="1.3" fill="#8a8a8a"/></g>
<rect x="794" y="302.99" width="7.4" height="7" fill="#b4dbd2"/>
<g transform="translate(807.9,306.59)"><ellipse cx="0" cy="0" rx="3.6" ry="3" fill="#e8e8e8" stroke="#3c3c3c" stroke-width="1.2"/><path d="M-3.4,-0.4 Q0,-3.4 3.4,-0.4" stroke="#3c3c3c" stroke-width="1.3" fill="none"/><circle cx="0" cy="0.3" r="1.3" fill="#8a8a8a"/></g>
<rect x="794" y="312.40" width="7.4" height="7" fill="#d8c852"/>
<g transform="translate(807.9,316.0)"><ellipse cx="0" cy="0" rx="3.6" ry="3" fill="#e8e8e8" stroke="#3c3c3c" stroke-width="1.2"/><path d="M-3.4,-0.4 Q0,-3.4 3.4,-0.4" stroke="#3c3c3c" stroke-width="1.3" fill="none"/><circle cx="0" cy="0.3" r="1.3" fill="#8a8a8a"/></g>
<path d="M790,333.4 L792.4,336 L790,338.6 Z" fill="#222"/>
<path d="M887.4,364.2 l2.6,2.6 l2.6,-2.6 M887.4,389 l2.6,2.6 l2.6,-2.6" stroke="#777" stroke-width="0.8" fill="none"/>
<rect x="785.6" y="417.10" width="6.9" height="6.9" rx="1.2" fill="#0a63b8"/><path d="M787.1,420.60 l1.5,1.6 l2.6,-3.2" stroke="#fff" stroke-width="0.9" fill="none"/><rect x="785.6" y="426.53" width="6.9" height="6.9" rx="1.2" fill="#0a63b8"/><path d="M787.1,430.03 l1.5,1.6 l2.6,-3.2" stroke="#fff" stroke-width="0.9" fill="none"/><rect x="785.6" y="435.96" width="6.9" height="6.9" rx="1.2" fill="#0a63b8"/><path d="M787.1,439.46 l1.5,1.6 l2.6,-3.2" stroke="#fff" stroke-width="0.9" fill="none"/><rect x="785.6" y="445.39" width="6.9" height="6.9" rx="1.2" fill="#0a63b8"/><path d="M787.1,448.89 l1.5,1.6 l2.6,-3.2" stroke="#fff" stroke-width="0.9" fill="none"/><rect x="785.6" y="454.82" width="6.9" height="6.9" rx="1.2" fill="#0a63b8"/><path d="M787.1,458.32 l1.5,1.6 l2.6,-3.2" stroke="#fff" stroke-width="0.9" fill="none"/><rect x="785.6" y="464.25" width="6.9" height="6.9" rx="1.2" fill="#0a63b8"/><path d="M787.1,467.75 l1.5,1.6 l2.6,-3.2" stroke="#fff" stroke-width="0.9" fill="none"/><rect x="835.0999999999999" y="417.40" width="6.3" height="6.3" rx="1.2" fill="#fdfdfd" stroke="#8a8a8a" stroke-width="0.6"/><rect x="834.8" y="426.53" width="6.9" height="6.9" rx="1.2" fill="#0a63b8"/><path d="M836.3,430.03 l1.5,1.6 l2.6,-3.2" stroke="#fff" stroke-width="0.9" fill="none"/><rect x="834.8" y="435.96" width="6.9" height="6.9" rx="1.2" fill="#0a63b8"/><path d="M836.3,439.46 l1.5,1.6 l2.6,-3.2" stroke="#fff" stroke-width="0.9" fill="none"/><rect x="834.8" y="445.39" width="6.9" height="6.9" rx="1.2" fill="#0a63b8"/><path d="M836.3,448.89 l1.5,1.6 l2.6,-3.2" stroke="#fff" stroke-width="0.9" fill="none"/><rect x="834.8" y="454.82" width="6.9" height="6.9" rx="1.2" fill="#0a63b8"/><path d="M836.3,458.32 l1.5,1.6 l2.6,-3.2" stroke="#fff" stroke-width="0.9" fill="none"/><rect x="834.8" y="464.25" width="6.9" height="6.9" rx="1.2" fill="#0a63b8"/><path d="M836.3,467.75 l1.5,1.6 l2.6,-3.2" stroke="#fff" stroke-width="0.9" fill="none"/>
</svg>
</body></html>
